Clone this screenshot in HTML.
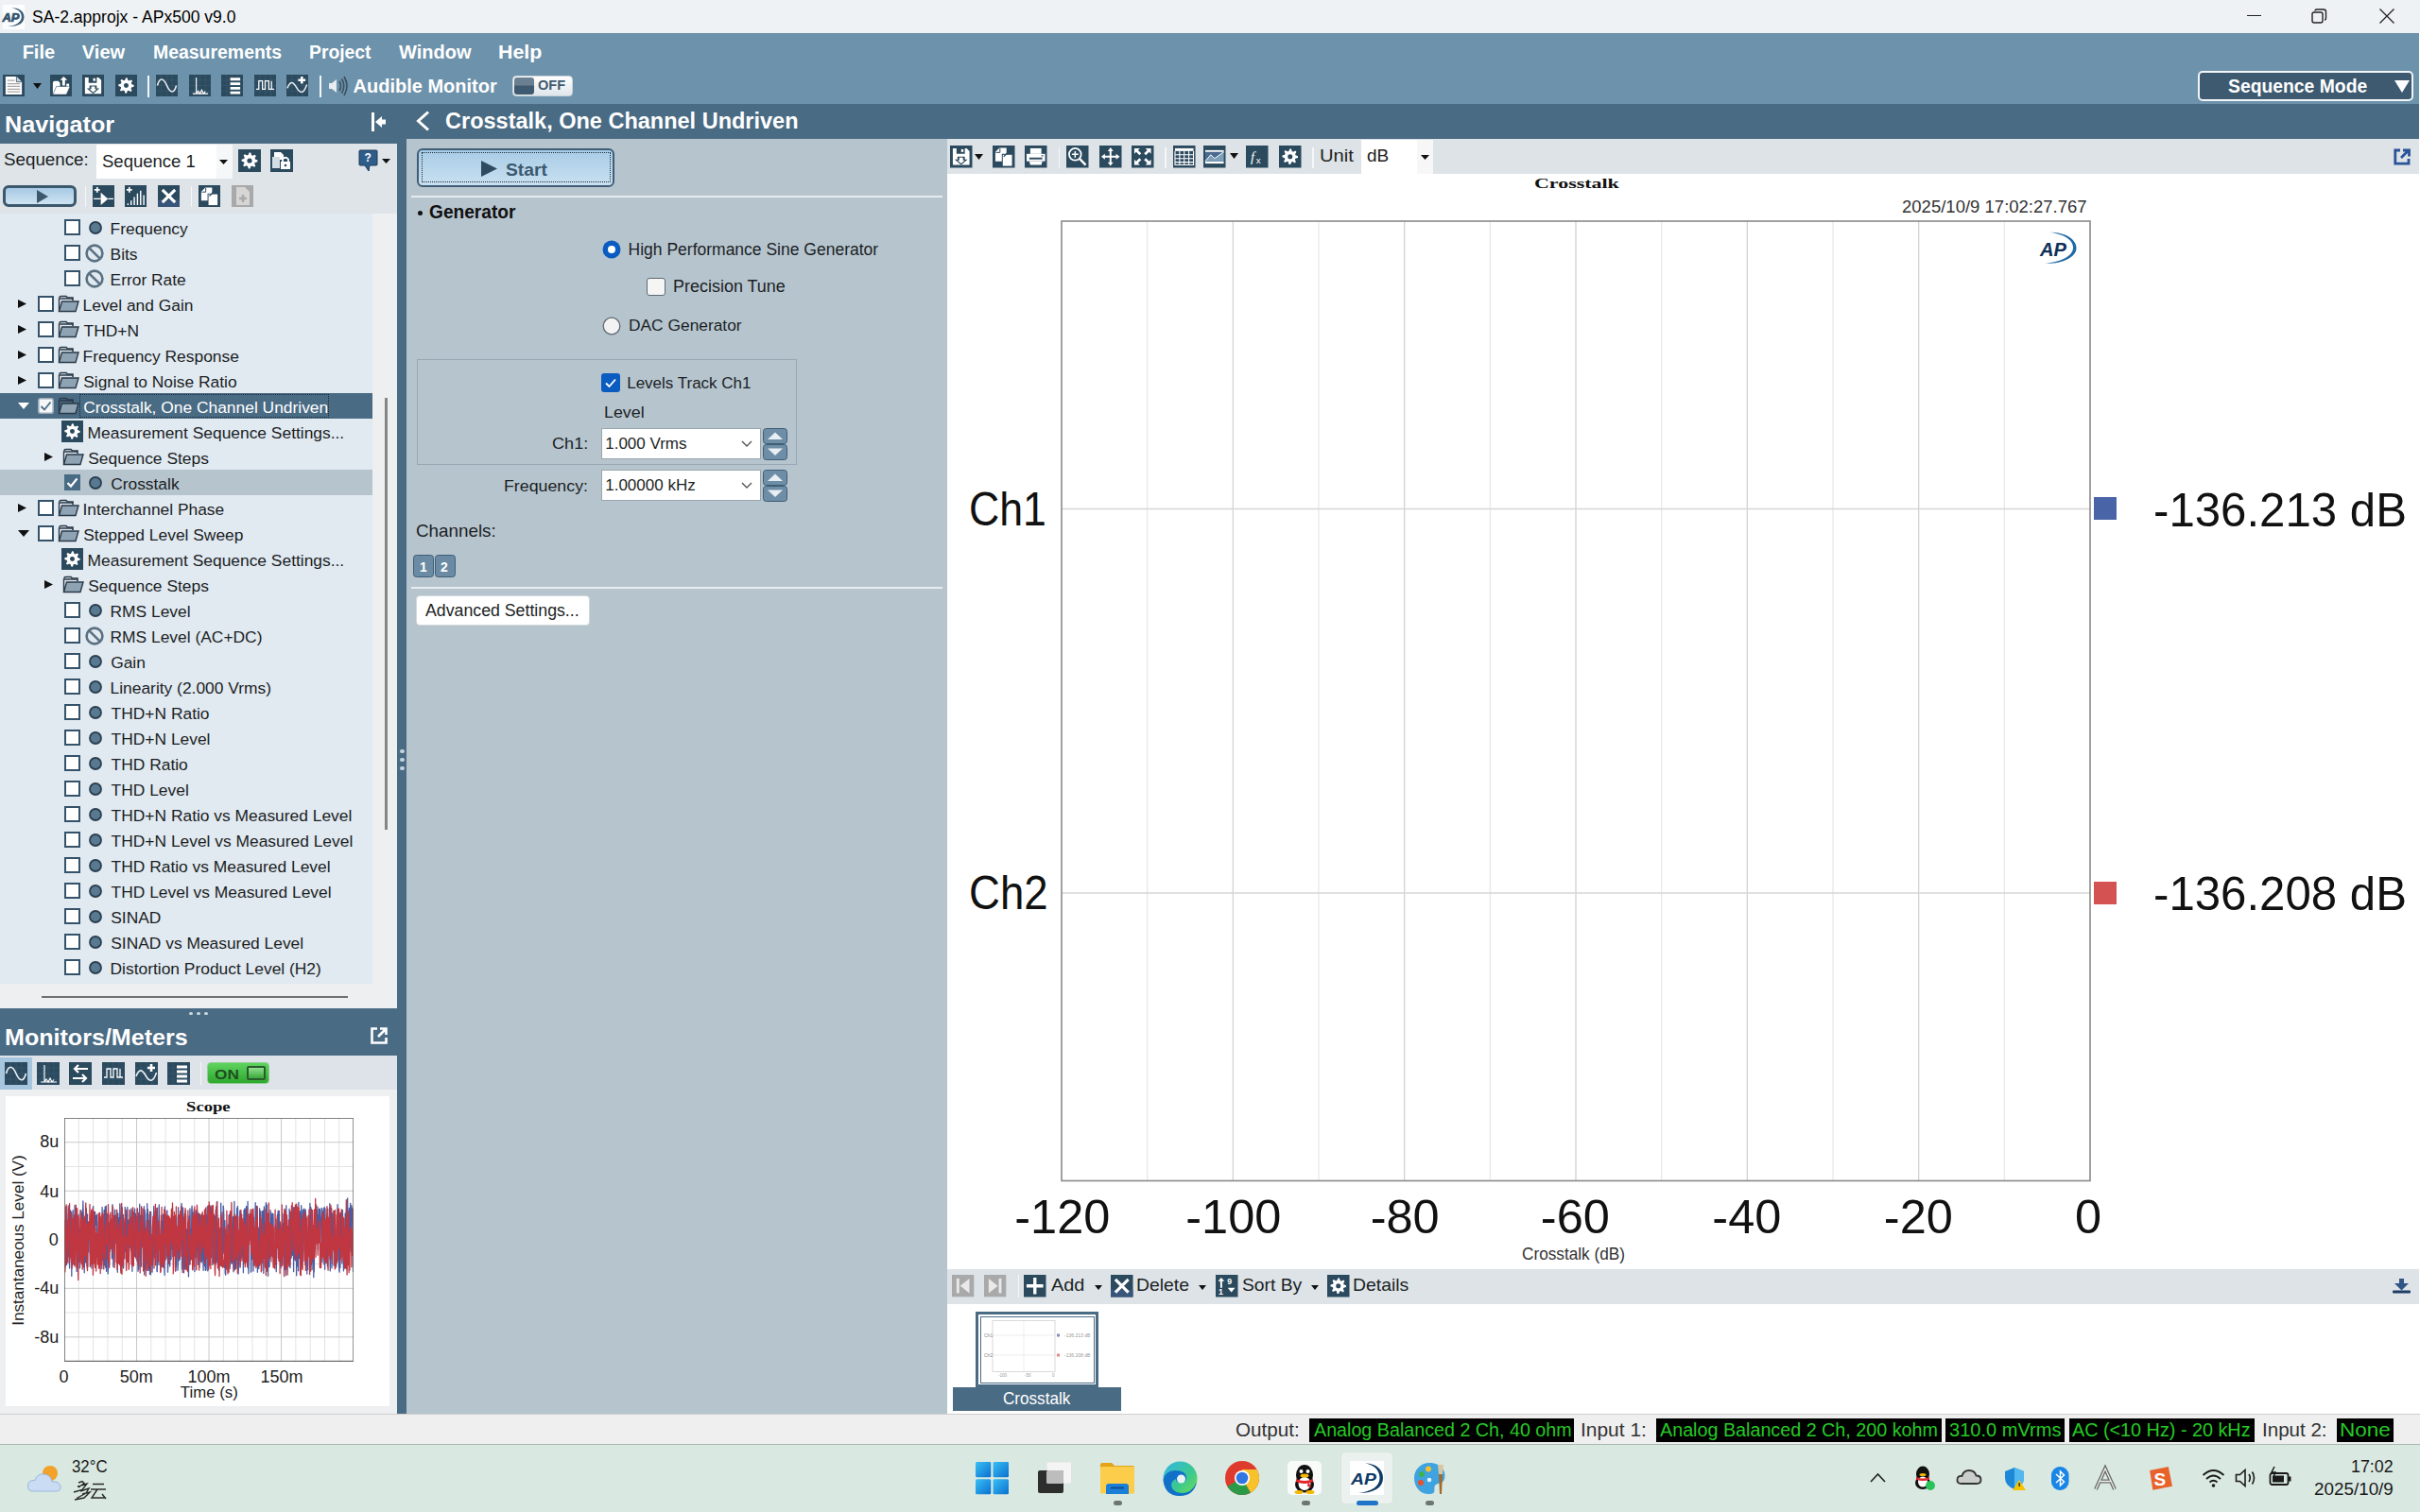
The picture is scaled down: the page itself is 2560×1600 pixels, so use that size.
<!DOCTYPE html>
<html><head><meta charset="utf-8">
<style>
*{box-sizing:border-box;margin:0;padding:0}
html,body{width:2560px;height:1600px;overflow:hidden;background:#fff;font-family:"Liberation Sans",sans-serif;position:relative}
.a{position:absolute}
.t{position:absolute;white-space:pre;line-height:1}
svg{overflow:visible}
</style></head><body>
<div class="a" style="left:0px;top:0px;width:2560px;height:35px;background:#eef2f4;"></div>
<div class="a" style="left:2.5px;top:5px;width:23.5px;height:25.5px;background:#fbfdfe;"></div>
<svg class="a" style="left:3px;top:6.5px;" width="23" height="22" viewBox="0 0 23 22"><path d="M9 1.2 C18 1 22.5 5.5 22.5 11 C22.5 17 17 21.5 5 21 C15 20 19.5 16 19.8 11 C20 6 16 2.5 9 1.2Z" fill="#3d5a72"/><text x="-0.5" y="16" font-family="Liberation Sans" font-weight="bold" font-style="italic" font-size="12.5" fill="#34526b" stroke="#34526b" stroke-width="0.7" textLength="18" lengthAdjust="spacingAndGlyphs">AP</text></svg>
<div class="t" style="left:33.91px;top:8.50px;font-size:18px;font-family:'Liberation Sans',sans-serif;color:#000;transform:scaleX(0.9743);transform-origin:0 0;">SA-2.approjx - APx500 v9.0</div>
<div class="a" style="left:2377px;top:16px;width:15px;height:1px;background:#222;"></div>
<svg class="a" style="left:2444px;top:8px;" width="20" height="18" viewBox="0 0 20 18"><rect x="2" y="5" width="11" height="11" rx="2" fill="none" stroke="#222" stroke-width="1.4"/><path d="M5 3.5 Q5 2 7 2 H14 Q16.5 2 16.5 4.5 V11 Q16.5 13 15 13" fill="none" stroke="#222" stroke-width="1.4"/></svg>
<svg class="a" style="left:2516px;top:8px;" width="18" height="18" viewBox="0 0 18 18"><path d="M1.5 1.5 L16.5 16.5 M16.5 1.5 L1.5 16.5" stroke="#222" stroke-width="1.3"/></svg>
<div class="a" style="left:0px;top:35px;width:2559px;height:75px;background:#6d92ab;"></div>
<div class="t" style="left:23.65px;top:45.00px;font-size:20px;font-family:'Liberation Sans',sans-serif;font-weight:bold;color:#fff;">File</div>
<div class="t" style="left:86.85px;top:45.00px;font-size:20px;font-family:'Liberation Sans',sans-serif;font-weight:bold;color:#fff;">View</div>
<div class="t" style="left:161.69px;top:45.00px;font-size:20px;font-family:'Liberation Sans',sans-serif;font-weight:bold;color:#fff;transform:scaleX(0.9717);transform-origin:0 0;">Measurements</div>
<div class="t" style="left:326.69px;top:45.00px;font-size:20px;font-family:'Liberation Sans',sans-serif;font-weight:bold;color:#fff;transform:scaleX(0.9668);transform-origin:0 0;">Project</div>
<div class="t" style="left:422.00px;top:45.00px;font-size:20px;font-family:'Liberation Sans',sans-serif;font-weight:bold;color:#fff;">Window</div>
<div class="t" style="left:526.56px;top:45.00px;font-size:20px;font-family:'Liberation Sans',sans-serif;font-weight:bold;color:#fff;transform:scaleX(1.0693);transform-origin:0 0;">Help</div>
<svg class="a" style="left:3px;top:79px;" width="23" height="23" viewBox="0 0 24 24"><rect width="24" height="24" fill="#2c4a5e"/><path d="M3 2 H15 L21 8 V22 H3 Z" fill="#fff"/><path d="M15 2 V8 H21" fill="#c9d3da" stroke="#2c4a5e" stroke-width="0.8"/><path d="M5 6.5H13 M5 10H19 M5 13H19 M5 16H19 M5 19H19" stroke="#a8a8a8" stroke-width="1.3"/></svg>
<svg class="a" style="left:35px;top:88px;" width="9" height="6" viewBox="0 0 9 6"><path d="M0 0H9L4.5 6Z" fill="#111"/></svg>
<svg class="a" style="left:53px;top:79px;" width="23" height="23" viewBox="0 0 24 24"><rect width="24" height="24" fill="#2c4a5e"/><path d="M3 9 Q3 7 5 7 H9 L11 9 V22 H3Z" fill="#fff"/><path d="M3 22 L7 13 H22 L18 22Z" fill="#fff" stroke="#2c4a5e" stroke-width="0.6"/><path d="M15 2 L19 6 H16.5 V12 H13.5 V6 H11Z" fill="#fff"/><rect x="18" y="10" width="3" height="3" fill="#fff"/></svg>
<svg class="a" style="left:87px;top:79px;" width="23" height="23" viewBox="0 0 24 24"><rect width="24" height="24" fill="#2c4a5e"/><path d="M3 3 H7 V9 H16 V3 H18 L21 6 V21 H3Z" fill="#fff"/><rect x="12" y="4" width="2.5" height="3" fill="#fff"/><path d="M8 12 H16 V15 H19 L12 21 L5 15 H8Z" fill="#2c4a5e"/><path d="M10 13 H14 V16 H16 L12 19.5 L8 16 H10Z" fill="#fff"/></svg>
<svg class="a" style="left:122px;top:79px;" width="23" height="23" viewBox="0 0 24 24"><rect width="24" height="24" fill="#2c4a5e"/><path d="M20.49 11.58L20.41 13.25L17.65 14.02L17.15 15.08L18.30 17.71L17.06 18.83L14.57 17.42L13.46 17.82L12.42 20.49L10.75 20.41L9.98 17.65L8.92 17.15L6.29 18.30L5.17 17.06L6.58 14.57L6.18 13.46L3.51 12.42L3.59 10.75L6.35 9.98L6.85 8.92L5.70 6.29L6.94 5.17L9.43 6.58L10.54 6.18L11.58 3.51L13.25 3.59L14.02 6.35L15.08 6.85L17.71 5.70L18.83 6.94L17.42 9.43L17.82 10.54Z" fill="#fff"/><circle cx="12" cy="12" r="5.88" fill="#fff"/><circle cx="12" cy="12" r="2.6" fill="#2c4a5e"/></svg>
<div class="a" style="left:156px;top:80px;width:2px;height:23px;background:#f4f7f9;"></div>
<svg class="a" style="left:165px;top:79px;" width="23" height="23" viewBox="0 0 24 24"><rect width="24" height="24" fill="#2c4a5e"/><path d="M0 6H24M0 12H24M0 18H24M6 0V24M12 0V24M18 0V24" stroke="#3d5b72" stroke-width="0.6"/><path d="M1.5 12 C4 3 8 3 12 12 S20 21 22.5 12" fill="none" stroke="#e8eef2" stroke-width="1.7"/></svg>
<svg class="a" style="left:200px;top:79px;" width="23" height="23" viewBox="0 0 24 24"><rect width="24" height="24" fill="#2c4a5e"/><path d="M0 6H24M0 12H24M0 18H24M6 0V24M12 0V24M18 0V24" stroke="#3d5b72" stroke-width="0.6"/><path d="M4 21H21 M8 21V3 M8 21 L10 18 L12 21 L14 17 L16 21 L18 18.5" fill="none" stroke="#fff" stroke-width="1.2"/></svg>
<svg class="a" style="left:234px;top:79px;" width="23" height="23" viewBox="0 0 24 24"><rect width="24" height="24" fill="#2c4a5e"/><path d="M0 6H24M0 12H24M0 18H24M6 0V24M12 0V24M18 0V24" stroke="#3d5b72" stroke-width="0.6"/><path d="M10 5H21M10 10H21M10 15H21M10 20H21" stroke="#fff" stroke-width="3"/></svg>
<svg class="a" style="left:269px;top:79px;" width="23" height="23" viewBox="0 0 24 24"><rect width="24" height="24" fill="#2c4a5e"/><path d="M0 6H24M0 12H24M0 18H24M6 0V24M12 0V24M18 0V24" stroke="#3d5b72" stroke-width="0.6"/><path d="M2 16H5V7H9V16H12V7H16V16H19V7 M19 16 H22" fill="none" stroke="#fff" stroke-width="1.3"/></svg>
<svg class="a" style="left:303px;top:79px;" width="23" height="23" viewBox="0 0 24 24"><rect width="24" height="24" fill="#2c4a5e"/><path d="M0 6H24M0 12H24M0 18H24M6 0V24M12 0V24M18 0V24" stroke="#3d5b72" stroke-width="0.6"/><path d="M1 15 C4 7 7 7 11 14 S19 22 22.5 11" fill="none" stroke="#e8eef2" stroke-width="1.6"/><path d="M17 2V10M13 6H21" stroke="#fff" stroke-width="2.6"/></svg>
<div class="a" style="left:338px;top:80px;width:2px;height:23px;background:#f4f7f9;"></div>
<svg class="a" style="left:346px;top:79px;" width="22" height="24" viewBox="0 0 22 24"><path d="M2 9 H5 L10 5 V19 L5 15 H2Z" fill="#e6ecf0"/><path d="M13 7 Q16 12 13 17 M15.5 4.5 Q20 12 15.5 19.5 M18 2 Q24 12 18 22" fill="none" stroke="#3b4f5e" stroke-width="1.6"/></svg>
<div class="t" style="left:373.50px;top:81.00px;font-size:20px;font-family:'Liberation Sans',sans-serif;font-weight:bold;color:#fff;">Audible Monitor</div>
<div class="a" style="left:541.5px;top:80px;width:64.5px;height:22px;background:linear-gradient(#ffffff,#dfe6ea);border-radius:4px;border:1px solid #c9d3da"></div>
<div class="a" style="left:544px;top:82px;width:21px;height:18px;background:linear-gradient(#6a8091 0%,#6a8091 45%,#3d5a70 50%,#3d5a70 100%);border-radius:3px"></div>
<div class="t" style="left:569.12px;top:82.42px;font-size:15.5px;font-family:'Liberation Sans',sans-serif;font-weight:bold;color:#3d5a70;transform:scaleX(0.9396);transform-origin:0 0;">OFF</div>
<div class="a" style="left:2325px;top:75px;width:228px;height:31.5px;background:#3d5a70;border:2.5px solid #f2f5f7;border-radius:5px"></div>
<div class="t" style="left:2357.42px;top:81.00px;font-size:20px;font-family:'Liberation Sans',sans-serif;font-weight:bold;color:#fff;transform:scaleX(0.9669);transform-origin:0 0;">Sequence Mode</div>
<svg class="a" style="left:2533px;top:85px;" width="16" height="13" viewBox="0 0 16 13"><path d="M0 0H16L8 13Z" fill="#fff"/></svg>
<div class="a" style="left:0px;top:110px;width:430px;height:42px;background:#4a6b84;"></div>
<div class="t" style="left:5.30px;top:119.60px;font-size:24px;font-family:'Liberation Sans',sans-serif;font-weight:bold;color:#fff;transform:scaleX(1.0486);transform-origin:0 0;">Navigator</div>
<div class="a" style="left:393px;top:119px;width:3px;height:20px;background:#fff;"></div>
<svg class="a" style="left:397px;top:122px;" width="12" height="14" viewBox="0 0 12 14"><path d="M0 7 L7 1 V4.5 H11 V9.5 H7 V13Z" fill="#fff"/></svg>
<div class="a" style="left:0px;top:152px;width:420px;height:74px;background:#dfe4e8;"></div>
<div class="t" style="left:4.35px;top:159.53px;font-size:18.2px;font-family:'Liberation Sans',sans-serif;color:#1b1f24;transform:scaleX(1.0321);transform-origin:0 0;">Sequence:</div>
<div class="a" style="left:102px;top:152.5px;width:144px;height:36px;background:#fff;"></div>
<div class="a" style="left:228.5px;top:152.5px;width:17.5px;height:36px;background:#f6f7f8;"></div>
<div class="t" style="left:107.97px;top:161.53px;font-size:18.2px;font-family:'Liberation Sans',sans-serif;color:#1b1f24;transform:scaleX(1.0182);transform-origin:0 0;">Sequence 1</div>
<svg class="a" style="left:232px;top:169px;" width="9" height="5" viewBox="0 0 9 5"><path d="M0 0H9L4.5 5Z" fill="#111"/></svg>
<svg class="a" style="left:252px;top:158px;" width="24" height="24" viewBox="0 0 24 24"><rect width="24" height="24" fill="#2c4a5e"/><path d="M20.49 11.58L20.41 13.25L17.65 14.02L17.15 15.08L18.30 17.71L17.06 18.83L14.57 17.42L13.46 17.82L12.42 20.49L10.75 20.41L9.98 17.65L8.92 17.15L6.29 18.30L5.17 17.06L6.58 14.57L6.18 13.46L3.51 12.42L3.59 10.75L6.35 9.98L6.85 8.92L5.70 6.29L6.94 5.17L9.43 6.58L10.54 6.18L11.58 3.51L13.25 3.59L14.02 6.35L15.08 6.85L17.71 5.70L18.83 6.94L17.42 9.43L17.82 10.54Z" fill="#fff"/><circle cx="12" cy="12" r="5.88" fill="#fff"/><circle cx="12" cy="12" r="2.6" fill="#2c4a5e"/></svg>
<svg class="a" style="left:286px;top:158px;" width="24" height="24" viewBox="0 0 24 24"><rect width="24" height="24" fill="#2c4a5e"/><path d="M4 3 H11 L14 6 V11 H4Z" fill="#fff"/><path d="M2 8 H10 V20 H2Z" fill="#d4dde3"/><rect x="11" y="13" width="10" height="8" fill="#fff"/><path d="M13 13 V10.5 Q16 7 19 10.5 V13" fill="none" stroke="#fff" stroke-width="1.8"/><circle cx="16" cy="17" r="1.3" fill="#2c4a5e"/></svg>
<svg class="a" style="left:379px;top:158px;" width="21" height="25" viewBox="0 0 21 25"><path d="M2 1 H19 Q20 1 20 2 V16 Q20 17 19 17 H12 L11 23 L7 17 H2 Q1 17 1 16 V2 Q1 1 2 1Z" fill="#2f5d8a" stroke="#1e3b58" stroke-width="1"/><text x="6.5" y="13" font-family="Liberation Sans" font-weight="bold" font-size="12" fill="#fff">?</text></svg>
<svg class="a" style="left:404px;top:168px;" width="9" height="5" viewBox="0 0 9 5"><path d="M0 0H9L4.5 5Z" fill="#111"/></svg>
<div class="a" style="left:3.2px;top:195.7px;width:77.8px;height:23.2px;background:linear-gradient(#a6c9e3,#cfe3f1);border:3px solid #3b586d;border-radius:6px"></div>
<svg class="a" style="left:39px;top:201px;" width="12" height="14" viewBox="0 0 12 14"><path d="M0 0 L12 7 L0 14Z" fill="#3b586d"/></svg>
<div class="a" style="left:89.5px;top:197px;width:1.5px;height:22px;background:#f5f7f8;"></div>
<svg class="a" style="left:98px;top:196px;" width="23" height="23" viewBox="0 0 24 24"><rect width="24" height="24" fill="#2c4a5e"/><path d="M2 5H8M5 2V8" stroke="#fff" stroke-width="1.8"/><path d="M1 15H9 M17 15H23" stroke="#fff" stroke-width="1.2"/><path d="M9 8 L17 15 L9 22Z" fill="#fff"/></svg>
<svg class="a" style="left:132px;top:196px;" width="23" height="23" viewBox="0 0 24 24"><rect width="24" height="24" fill="#2c4a5e"/><path d="M2 5H8M5 2V8" stroke="#fff" stroke-width="1.8"/><path d="M3.5 22V20 M7 22V17 M10.5 22V13 M14 22V9 M17.5 22V6 M21 22V11" stroke="#fff" stroke-width="1.5"/></svg>
<svg class="a" style="left:166.6px;top:196px;" width="23" height="23" viewBox="0 0 24 24"><rect width="24" height="24" fill="#2c4a5e"/><rect y="16" width="24" height="8" fill="#38557a"/><path d="M5 5 L19 19 M19 5 L5 19" stroke="#fff" stroke-width="3.2"/></svg>
<div class="a" style="left:201.5px;top:197px;width:1.5px;height:22px;background:#f5f7f8;"></div>
<svg class="a" style="left:210px;top:196px;" width="23" height="23" viewBox="0 0 24 24"><rect width="24" height="24" fill="#2c4a5e"/><path d="M3 7 L7.5 2.5 H15 V9 H10 V17 H3Z" fill="#fff"/><path d="M3.5 7.5 H8 V3" fill="none" stroke="#2c4a5e" stroke-width="1"/><path d="M11 10 H21 V22 H11Z" fill="#fff"/><path d="M12 12 L16 8" stroke="#2c4a5e" stroke-width="1.3"/></svg>
<svg class="a" style="left:245px;top:196px;" width="23" height="23" viewBox="0 0 23 23"><rect width="23" height="23" fill="#a9a9a9"/><path d="M5 2 H14 L19 7 V21 H5Z" fill="#d6d6d6"/><path d="M12 10V18M8 14H16" stroke="#a9a9a9" stroke-width="2.4"/></svg>
<div class="a" style="left:0px;top:226px;width:394px;height:815px;background:#e1e9f1;"></div>
<div class="a" style="left:394px;top:226px;width:26px;height:815px;background:#eeeff0;"></div>
<div class="a" style="left:406.5px;top:421px;width:3px;height:457px;background:#858585;"></div>
<div class="a" style="left:68px;top:232.0px;width:17px;height:17px;background:#fff;border:2.6px solid #34526a"></div>
<svg class="a" style="left:94.3px;top:233.5px;" width="14" height="14" viewBox="0 0 14 14"><circle cx="7" cy="7" r="6" fill="#587990" stroke="#2a3f50" stroke-width="1.8"/></svg>
<div class="t" style="left:116.56px;top:234.01px;font-size:17.4px;font-family:'Liberation Sans',sans-serif;color:#1b1f24;">Frequency</div>
<div class="a" style="left:68px;top:259.0px;width:17px;height:17px;background:#fff;border:2.6px solid #34526a"></div>
<svg class="a" style="left:90px;top:257.5px;" width="20" height="20" viewBox="0 0 20 20"><circle cx="10" cy="10" r="8.4" fill="none" stroke="#5a7182" stroke-width="2.6"/><path d="M4.3 4.3 L15.7 15.7" stroke="#5a7182" stroke-width="2.6"/></svg>
<div class="t" style="left:116.56px;top:261.01px;font-size:17.4px;font-family:'Liberation Sans',sans-serif;color:#1b1f24;">Bits</div>
<div class="a" style="left:68px;top:286.0px;width:17px;height:17px;background:#fff;border:2.6px solid #34526a"></div>
<svg class="a" style="left:90px;top:284.5px;" width="20" height="20" viewBox="0 0 20 20"><circle cx="10" cy="10" r="8.4" fill="none" stroke="#5a7182" stroke-width="2.6"/><path d="M4.3 4.3 L15.7 15.7" stroke="#5a7182" stroke-width="2.6"/></svg>
<div class="t" style="left:116.56px;top:288.01px;font-size:17.4px;font-family:'Liberation Sans',sans-serif;color:#1b1f24;">Error Rate</div>
<svg class="a" style="left:18.5px;top:317.0px;" width="9" height="9" viewBox="0 0 9 9"><path d="M0 0 L9 4.5 L0 9Z" fill="#111"/></svg>
<div class="a" style="left:39.5px;top:313.0px;width:17px;height:17px;background:#fff;border:2.6px solid #34526a"></div>
<svg class="a" style="left:61px;top:312.0px;" width="23" height="19" viewBox="0 0 23 19"><path d="M2 3 Q2 1.5 3.5 1.5 H9 L10.5 3 H16 V6" fill="none" stroke="#2a3a48" stroke-width="1.6"/><path d="M1.5 17.5 V4 H16" fill="none" stroke="#2a3a48" stroke-width="1.4"/><path d="M4.5 7 H22 L19 17.5 H1.5 Z" fill="#8ea3b3" stroke="#2a3a48" stroke-width="1.4"/></svg>
<div class="t" style="left:87.56px;top:315.01px;font-size:17.4px;font-family:'Liberation Sans',sans-serif;color:#1b1f24;">Level and Gain</div>
<svg class="a" style="left:18.5px;top:344.0px;" width="9" height="9" viewBox="0 0 9 9"><path d="M0 0 L9 4.5 L0 9Z" fill="#111"/></svg>
<div class="a" style="left:39.5px;top:340.0px;width:17px;height:17px;background:#fff;border:2.6px solid #34526a"></div>
<svg class="a" style="left:61px;top:339.0px;" width="23" height="19" viewBox="0 0 23 19"><path d="M2 3 Q2 1.5 3.5 1.5 H9 L10.5 3 H16 V6" fill="none" stroke="#2a3a48" stroke-width="1.6"/><path d="M1.5 17.5 V4 H16" fill="none" stroke="#2a3a48" stroke-width="1.4"/><path d="M4.5 7 H22 L19 17.5 H1.5 Z" fill="#8ea3b3" stroke="#2a3a48" stroke-width="1.4"/></svg>
<div class="t" style="left:88.61px;top:342.01px;font-size:17.4px;font-family:'Liberation Sans',sans-serif;color:#1b1f24;">THD+N</div>
<svg class="a" style="left:18.5px;top:371.0px;" width="9" height="9" viewBox="0 0 9 9"><path d="M0 0 L9 4.5 L0 9Z" fill="#111"/></svg>
<div class="a" style="left:39.5px;top:367.0px;width:17px;height:17px;background:#fff;border:2.6px solid #34526a"></div>
<svg class="a" style="left:61px;top:366.0px;" width="23" height="19" viewBox="0 0 23 19"><path d="M2 3 Q2 1.5 3.5 1.5 H9 L10.5 3 H16 V6" fill="none" stroke="#2a3a48" stroke-width="1.6"/><path d="M1.5 17.5 V4 H16" fill="none" stroke="#2a3a48" stroke-width="1.4"/><path d="M4.5 7 H22 L19 17.5 H1.5 Z" fill="#8ea3b3" stroke="#2a3a48" stroke-width="1.4"/></svg>
<div class="t" style="left:87.56px;top:369.01px;font-size:17.4px;font-family:'Liberation Sans',sans-serif;color:#1b1f24;">Frequency Response</div>
<svg class="a" style="left:18.5px;top:398.0px;" width="9" height="9" viewBox="0 0 9 9"><path d="M0 0 L9 4.5 L0 9Z" fill="#111"/></svg>
<div class="a" style="left:39.5px;top:394.0px;width:17px;height:17px;background:#fff;border:2.6px solid #34526a"></div>
<svg class="a" style="left:61px;top:393.0px;" width="23" height="19" viewBox="0 0 23 19"><path d="M2 3 Q2 1.5 3.5 1.5 H9 L10.5 3 H16 V6" fill="none" stroke="#2a3a48" stroke-width="1.6"/><path d="M1.5 17.5 V4 H16" fill="none" stroke="#2a3a48" stroke-width="1.4"/><path d="M4.5 7 H22 L19 17.5 H1.5 Z" fill="#8ea3b3" stroke="#2a3a48" stroke-width="1.4"/></svg>
<div class="t" style="left:88.22px;top:396.01px;font-size:17.4px;font-family:'Liberation Sans',sans-serif;color:#1b1f24;">Signal to Noise Ratio</div>
<div class="a" style="left:0px;top:416px;width:394px;height:26.5px;background:#4a6b84;"></div>
<div class="a" style="left:84px;top:416.5px;width:264px;height:25.5px;background:transparent;border:1px dotted #1a2a38"></div>
<svg class="a" style="left:18.7px;top:426.0px;" width="12" height="7" viewBox="0 0 12 7"><path d="M0 0 H12 L6 7Z" fill="#fff"/></svg>
<svg class="a" style="left:39.5px;top:421.0px;" width="17" height="17" viewBox="0 0 17 17"><rect x="0.8" y="0.8" width="15.4" height="15.4" rx="2" fill="#f4f6f8" stroke="#9aabb8" stroke-width="1.6"/><path d="M3.5 9 L7 12.5 L13.5 4.5" fill="none" stroke="#4a6b84" stroke-width="1.8"/></svg>
<svg class="a" style="left:61px;top:420.0px;" width="23" height="19" viewBox="0 0 23 19"><path d="M2 3 Q2 1.5 3.5 1.5 H9 L10.5 3 H16 V6" fill="none" stroke="#2a3a48" stroke-width="1.6"/><path d="M1.5 17.5 V4 H16" fill="none" stroke="#2a3a48" stroke-width="1.4"/><path d="M4.5 7 H22 L19 17.5 H1.5 Z" fill="#8ea3b3" stroke="#2a3a48" stroke-width="1.4"/></svg>
<div class="t" style="left:88.13px;top:423.01px;font-size:17.4px;font-family:'Liberation Sans',sans-serif;color:#fff;">Crosstalk, One Channel Undriven</div>
<svg class="a" style="left:64.7px;top:445.0px;" width="23" height="23" viewBox="0 0 24 24"><rect width="24" height="24" fill="#2c4a5e"/><path d="M20.49 11.58L20.41 13.25L17.65 14.02L17.15 15.08L18.30 17.71L17.06 18.83L14.57 17.42L13.46 17.82L12.42 20.49L10.75 20.41L9.98 17.65L8.92 17.15L6.29 18.30L5.17 17.06L6.58 14.57L6.18 13.46L3.51 12.42L3.59 10.75L6.35 9.98L6.85 8.92L5.70 6.29L6.94 5.17L9.43 6.58L10.54 6.18L11.58 3.51L13.25 3.59L14.02 6.35L15.08 6.85L17.71 5.70L18.83 6.94L17.42 9.43L17.82 10.54Z" fill="#fff"/><circle cx="12" cy="12" r="5.88" fill="#fff"/><circle cx="12" cy="12" r="2.6" fill="#2c4a5e"/></svg>
<div class="t" style="left:92.56px;top:450.01px;font-size:17.4px;font-family:'Liberation Sans',sans-serif;color:#1b1f24;">Measurement Sequence Settings...</div>
<svg class="a" style="left:47px;top:479.0px;" width="9" height="9" viewBox="0 0 9 9"><path d="M0 0 L9 4.5 L0 9Z" fill="#111"/></svg>
<svg class="a" style="left:66px;top:474.0px;" width="23" height="19" viewBox="0 0 23 19"><path d="M2 3 Q2 1.5 3.5 1.5 H9 L10.5 3 H16 V6" fill="none" stroke="#2a3a48" stroke-width="1.6"/><path d="M1.5 17.5 V4 H16" fill="none" stroke="#2a3a48" stroke-width="1.4"/><path d="M4.5 7 H22 L19 17.5 H1.5 Z" fill="#8ea3b3" stroke="#2a3a48" stroke-width="1.4"/></svg>
<div class="t" style="left:93.22px;top:477.01px;font-size:17.4px;font-family:'Liberation Sans',sans-serif;color:#1b1f24;">Sequence Steps</div>
<div class="a" style="left:0px;top:497px;width:394px;height:26.5px;background:#b6c4ce;"></div>
<svg class="a" style="left:68px;top:502.0px;" width="17" height="17" viewBox="0 0 17 17"><rect width="17" height="17" fill="#4a6b84"/><path d="M3.5 9 L7 12.5 L13.5 4.5" fill="none" stroke="#fff" stroke-width="2.2"/></svg>
<svg class="a" style="left:94.3px;top:503.5px;" width="14" height="14" viewBox="0 0 14 14"><circle cx="7" cy="7" r="6" fill="#587990" stroke="#2a3f50" stroke-width="1.8"/></svg>
<div class="t" style="left:117.13px;top:504.01px;font-size:17.4px;font-family:'Liberation Sans',sans-serif;color:#1b1f24;">Crosstalk</div>
<svg class="a" style="left:18.5px;top:533.0px;" width="9" height="9" viewBox="0 0 9 9"><path d="M0 0 L9 4.5 L0 9Z" fill="#111"/></svg>
<div class="a" style="left:39.5px;top:529.0px;width:17px;height:17px;background:#fff;border:2.6px solid #34526a"></div>
<svg class="a" style="left:61px;top:528.0px;" width="23" height="19" viewBox="0 0 23 19"><path d="M2 3 Q2 1.5 3.5 1.5 H9 L10.5 3 H16 V6" fill="none" stroke="#2a3a48" stroke-width="1.6"/><path d="M1.5 17.5 V4 H16" fill="none" stroke="#2a3a48" stroke-width="1.4"/><path d="M4.5 7 H22 L19 17.5 H1.5 Z" fill="#8ea3b3" stroke="#2a3a48" stroke-width="1.4"/></svg>
<div class="t" style="left:87.39px;top:531.01px;font-size:17.4px;font-family:'Liberation Sans',sans-serif;color:#1b1f24;">Interchannel Phase</div>
<svg class="a" style="left:18.7px;top:561.0px;" width="12" height="7" viewBox="0 0 12 7"><path d="M0 0 H12 L6 7Z" fill="#111"/></svg>
<div class="a" style="left:39.5px;top:556.0px;width:17px;height:17px;background:#fff;border:2.6px solid #34526a"></div>
<svg class="a" style="left:61px;top:555.0px;" width="23" height="19" viewBox="0 0 23 19"><path d="M2 3 Q2 1.5 3.5 1.5 H9 L10.5 3 H16 V6" fill="none" stroke="#2a3a48" stroke-width="1.6"/><path d="M1.5 17.5 V4 H16" fill="none" stroke="#2a3a48" stroke-width="1.4"/><path d="M4.5 7 H22 L19 17.5 H1.5 Z" fill="#8ea3b3" stroke="#2a3a48" stroke-width="1.4"/></svg>
<div class="t" style="left:88.22px;top:558.01px;font-size:17.4px;font-family:'Liberation Sans',sans-serif;color:#1b1f24;">Stepped Level Sweep</div>
<svg class="a" style="left:64.7px;top:580.0px;" width="23" height="23" viewBox="0 0 24 24"><rect width="24" height="24" fill="#2c4a5e"/><path d="M20.49 11.58L20.41 13.25L17.65 14.02L17.15 15.08L18.30 17.71L17.06 18.83L14.57 17.42L13.46 17.82L12.42 20.49L10.75 20.41L9.98 17.65L8.92 17.15L6.29 18.30L5.17 17.06L6.58 14.57L6.18 13.46L3.51 12.42L3.59 10.75L6.35 9.98L6.85 8.92L5.70 6.29L6.94 5.17L9.43 6.58L10.54 6.18L11.58 3.51L13.25 3.59L14.02 6.35L15.08 6.85L17.71 5.70L18.83 6.94L17.42 9.43L17.82 10.54Z" fill="#fff"/><circle cx="12" cy="12" r="5.88" fill="#fff"/><circle cx="12" cy="12" r="2.6" fill="#2c4a5e"/></svg>
<div class="t" style="left:92.56px;top:585.01px;font-size:17.4px;font-family:'Liberation Sans',sans-serif;color:#1b1f24;">Measurement Sequence Settings...</div>
<svg class="a" style="left:47px;top:614.0px;" width="9" height="9" viewBox="0 0 9 9"><path d="M0 0 L9 4.5 L0 9Z" fill="#111"/></svg>
<svg class="a" style="left:66px;top:609.0px;" width="23" height="19" viewBox="0 0 23 19"><path d="M2 3 Q2 1.5 3.5 1.5 H9 L10.5 3 H16 V6" fill="none" stroke="#2a3a48" stroke-width="1.6"/><path d="M1.5 17.5 V4 H16" fill="none" stroke="#2a3a48" stroke-width="1.4"/><path d="M4.5 7 H22 L19 17.5 H1.5 Z" fill="#8ea3b3" stroke="#2a3a48" stroke-width="1.4"/></svg>
<div class="t" style="left:93.22px;top:612.01px;font-size:17.4px;font-family:'Liberation Sans',sans-serif;color:#1b1f24;">Sequence Steps</div>
<div class="a" style="left:68px;top:637.0px;width:17px;height:17px;background:#fff;border:2.6px solid #34526a"></div>
<svg class="a" style="left:94.3px;top:638.5px;" width="14" height="14" viewBox="0 0 14 14"><circle cx="7" cy="7" r="6" fill="#587990" stroke="#2a3f50" stroke-width="1.8"/></svg>
<div class="t" style="left:116.56px;top:639.01px;font-size:17.4px;font-family:'Liberation Sans',sans-serif;color:#1b1f24;">RMS Level</div>
<div class="a" style="left:68px;top:664.0px;width:17px;height:17px;background:#fff;border:2.6px solid #34526a"></div>
<svg class="a" style="left:90px;top:662.5px;" width="20" height="20" viewBox="0 0 20 20"><circle cx="10" cy="10" r="8.4" fill="none" stroke="#5a7182" stroke-width="2.6"/><path d="M4.3 4.3 L15.7 15.7" stroke="#5a7182" stroke-width="2.6"/></svg>
<div class="t" style="left:116.56px;top:666.01px;font-size:17.4px;font-family:'Liberation Sans',sans-serif;color:#1b1f24;">RMS Level (AC+DC)</div>
<div class="a" style="left:68px;top:691.0px;width:17px;height:17px;background:#fff;border:2.6px solid #34526a"></div>
<svg class="a" style="left:94.3px;top:692.5px;" width="14" height="14" viewBox="0 0 14 14"><circle cx="7" cy="7" r="6" fill="#587990" stroke="#2a3f50" stroke-width="1.8"/></svg>
<div class="t" style="left:117.13px;top:693.01px;font-size:17.4px;font-family:'Liberation Sans',sans-serif;color:#1b1f24;">Gain</div>
<div class="a" style="left:68px;top:718.0px;width:17px;height:17px;background:#fff;border:2.6px solid #34526a"></div>
<svg class="a" style="left:94.3px;top:719.5px;" width="14" height="14" viewBox="0 0 14 14"><circle cx="7" cy="7" r="6" fill="#587990" stroke="#2a3f50" stroke-width="1.8"/></svg>
<div class="t" style="left:116.56px;top:720.01px;font-size:17.4px;font-family:'Liberation Sans',sans-serif;color:#1b1f24;">Linearity (2.000 Vrms)</div>
<div class="a" style="left:68px;top:745.0px;width:17px;height:17px;background:#fff;border:2.6px solid #34526a"></div>
<svg class="a" style="left:94.3px;top:746.5px;" width="14" height="14" viewBox="0 0 14 14"><circle cx="7" cy="7" r="6" fill="#587990" stroke="#2a3f50" stroke-width="1.8"/></svg>
<div class="t" style="left:117.61px;top:747.01px;font-size:17.4px;font-family:'Liberation Sans',sans-serif;color:#1b1f24;">THD+N Ratio</div>
<div class="a" style="left:68px;top:772.0px;width:17px;height:17px;background:#fff;border:2.6px solid #34526a"></div>
<svg class="a" style="left:94.3px;top:773.5px;" width="14" height="14" viewBox="0 0 14 14"><circle cx="7" cy="7" r="6" fill="#587990" stroke="#2a3f50" stroke-width="1.8"/></svg>
<div class="t" style="left:117.61px;top:774.01px;font-size:17.4px;font-family:'Liberation Sans',sans-serif;color:#1b1f24;">THD+N Level</div>
<div class="a" style="left:68px;top:799.0px;width:17px;height:17px;background:#fff;border:2.6px solid #34526a"></div>
<svg class="a" style="left:94.3px;top:800.5px;" width="14" height="14" viewBox="0 0 14 14"><circle cx="7" cy="7" r="6" fill="#587990" stroke="#2a3f50" stroke-width="1.8"/></svg>
<div class="t" style="left:117.61px;top:801.01px;font-size:17.4px;font-family:'Liberation Sans',sans-serif;color:#1b1f24;">THD Ratio</div>
<div class="a" style="left:68px;top:826.0px;width:17px;height:17px;background:#fff;border:2.6px solid #34526a"></div>
<svg class="a" style="left:94.3px;top:827.5px;" width="14" height="14" viewBox="0 0 14 14"><circle cx="7" cy="7" r="6" fill="#587990" stroke="#2a3f50" stroke-width="1.8"/></svg>
<div class="t" style="left:117.61px;top:828.01px;font-size:17.4px;font-family:'Liberation Sans',sans-serif;color:#1b1f24;">THD Level</div>
<div class="a" style="left:68px;top:853.0px;width:17px;height:17px;background:#fff;border:2.6px solid #34526a"></div>
<svg class="a" style="left:94.3px;top:854.5px;" width="14" height="14" viewBox="0 0 14 14"><circle cx="7" cy="7" r="6" fill="#587990" stroke="#2a3f50" stroke-width="1.8"/></svg>
<div class="t" style="left:117.61px;top:855.01px;font-size:17.4px;font-family:'Liberation Sans',sans-serif;color:#1b1f24;">THD+N Ratio vs Measured Level</div>
<div class="a" style="left:68px;top:880.0px;width:17px;height:17px;background:#fff;border:2.6px solid #34526a"></div>
<svg class="a" style="left:94.3px;top:881.5px;" width="14" height="14" viewBox="0 0 14 14"><circle cx="7" cy="7" r="6" fill="#587990" stroke="#2a3f50" stroke-width="1.8"/></svg>
<div class="t" style="left:117.61px;top:882.01px;font-size:17.4px;font-family:'Liberation Sans',sans-serif;color:#1b1f24;">THD+N Level vs Measured Level</div>
<div class="a" style="left:68px;top:907.0px;width:17px;height:17px;background:#fff;border:2.6px solid #34526a"></div>
<svg class="a" style="left:94.3px;top:908.5px;" width="14" height="14" viewBox="0 0 14 14"><circle cx="7" cy="7" r="6" fill="#587990" stroke="#2a3f50" stroke-width="1.8"/></svg>
<div class="t" style="left:117.61px;top:909.01px;font-size:17.4px;font-family:'Liberation Sans',sans-serif;color:#1b1f24;">THD Ratio vs Measured Level</div>
<div class="a" style="left:68px;top:934.0px;width:17px;height:17px;background:#fff;border:2.6px solid #34526a"></div>
<svg class="a" style="left:94.3px;top:935.5px;" width="14" height="14" viewBox="0 0 14 14"><circle cx="7" cy="7" r="6" fill="#587990" stroke="#2a3f50" stroke-width="1.8"/></svg>
<div class="t" style="left:117.61px;top:936.01px;font-size:17.4px;font-family:'Liberation Sans',sans-serif;color:#1b1f24;">THD Level vs Measured Level</div>
<div class="a" style="left:68px;top:961.0px;width:17px;height:17px;background:#fff;border:2.6px solid #34526a"></div>
<svg class="a" style="left:94.3px;top:962.5px;" width="14" height="14" viewBox="0 0 14 14"><circle cx="7" cy="7" r="6" fill="#587990" stroke="#2a3f50" stroke-width="1.8"/></svg>
<div class="t" style="left:117.22px;top:963.01px;font-size:17.4px;font-family:'Liberation Sans',sans-serif;color:#1b1f24;">SINAD</div>
<div class="a" style="left:68px;top:988.0px;width:17px;height:17px;background:#fff;border:2.6px solid #34526a"></div>
<svg class="a" style="left:94.3px;top:989.5px;" width="14" height="14" viewBox="0 0 14 14"><circle cx="7" cy="7" r="6" fill="#587990" stroke="#2a3f50" stroke-width="1.8"/></svg>
<div class="t" style="left:117.22px;top:990.01px;font-size:17.4px;font-family:'Liberation Sans',sans-serif;color:#1b1f24;">SINAD vs Measured Level</div>
<div class="a" style="left:68px;top:1015.0px;width:17px;height:17px;background:#fff;border:2.6px solid #34526a"></div>
<svg class="a" style="left:94.3px;top:1016.5px;" width="14" height="14" viewBox="0 0 14 14"><circle cx="7" cy="7" r="6" fill="#587990" stroke="#2a3f50" stroke-width="1.8"/></svg>
<div class="t" style="left:116.56px;top:1017.01px;font-size:17.4px;font-family:'Liberation Sans',sans-serif;color:#1b1f24;">Distortion Product Level (H2)</div>
<div class="a" style="left:0px;top:1041px;width:420px;height:26px;background:#eeeff0;"></div>
<div class="a" style="left:44px;top:1054px;width:324px;height:2px;background:#707070;"></div>
<div class="a" style="left:0px;top:1067px;width:430px;height:50px;background:#4a6b84;"></div>
<div class="a" style="left:200px;top:1070.5px;width:3.5px;height:3.5px;background:#c9d5de;border-radius:50%"></div>
<div class="a" style="left:208px;top:1070.5px;width:3.5px;height:3.5px;background:#c9d5de;border-radius:50%"></div>
<div class="a" style="left:216px;top:1070.5px;width:3.5px;height:3.5px;background:#c9d5de;border-radius:50%"></div>
<div class="t" style="left:5.31px;top:1085.60px;font-size:24px;font-family:'Liberation Sans',sans-serif;font-weight:bold;color:#fff;transform:scaleX(1.0451);transform-origin:0 0;">Monitors/Meters</div>
<svg class="a" style="left:391px;top:1086px;" width="20" height="20" viewBox="0 0 20 20"><path d="M8 2.5 H2.5 V17.5 H17.5 V12" fill="none" stroke="#fff" stroke-width="2.6"/><path d="M9 11 L17 3 M11 2.5 H17.5 V9" fill="none" stroke="#fff" stroke-width="2.6"/></svg>
<div class="a" style="left:0px;top:1117px;width:420px;height:36px;background:#dde3e8;"></div>
<div class="a" style="left:0px;top:1119px;width:34px;height:34px;background:#a6c6e0;"></div>
<svg class="a" style="left:4.5px;top:1124px;" width="24" height="24" viewBox="0 0 24 24"><rect width="24" height="24" fill="#2c4a5e"/><path d="M0 6H24M0 12H24M0 18H24M6 0V24M12 0V24M18 0V24" stroke="#3d5b72" stroke-width="0.6"/><path d="M1.5 12 C4 3 8 3 12 12 S20 21 22.5 12" fill="none" stroke="#e8eef2" stroke-width="1.7"/></svg>
<svg class="a" style="left:39px;top:1124px;" width="24" height="24" viewBox="0 0 24 24"><rect width="24" height="24" fill="#2c4a5e"/><path d="M0 6H24M0 12H24M0 18H24M6 0V24M12 0V24M18 0V24" stroke="#3d5b72" stroke-width="0.6"/><path d="M4 21H21 M8 21V3 M8 21 L10 18 L12 21 L14 17 L16 21 L18 18.5" fill="none" stroke="#fff" stroke-width="1.2"/></svg>
<svg class="a" style="left:73px;top:1124px;" width="24" height="24" viewBox="0 0 24 24"><rect width="24" height="24" fill="#2c4a5e"/><path d="M20 7 H6 M10 3 L6 7 L10 11 M4 17 H18 M14 13 L18 17 L14 21" fill="none" stroke="#fff" stroke-width="2.2"/></svg>
<svg class="a" style="left:107.6px;top:1124px;" width="24" height="24" viewBox="0 0 24 24"><rect width="24" height="24" fill="#2c4a5e"/><path d="M0 6H24M0 12H24M0 18H24M6 0V24M12 0V24M18 0V24" stroke="#3d5b72" stroke-width="0.6"/><path d="M2 16H5V7H9V16H12V7H16V16H19V7 M19 16 H22" fill="none" stroke="#fff" stroke-width="1.3"/></svg>
<svg class="a" style="left:142.6px;top:1124px;" width="24" height="24" viewBox="0 0 24 24"><rect width="24" height="24" fill="#2c4a5e"/><path d="M0 6H24M0 12H24M0 18H24M6 0V24M12 0V24M18 0V24" stroke="#3d5b72" stroke-width="0.6"/><path d="M1 15 C4 7 7 7 11 14 S19 22 22.5 11" fill="none" stroke="#e8eef2" stroke-width="1.6"/><path d="M17 2V10M13 6H21" stroke="#fff" stroke-width="2.6"/></svg>
<svg class="a" style="left:177px;top:1124px;" width="24" height="24" viewBox="0 0 24 24"><rect width="24" height="24" fill="#2c4a5e"/><path d="M0 6H24M0 12H24M0 18H24M6 0V24M12 0V24M18 0V24" stroke="#3d5b72" stroke-width="0.6"/><path d="M10 5H21M10 10H21M10 15H21M10 20H21" stroke="#fff" stroke-width="3"/></svg>
<div class="a" style="left:211.5px;top:1124px;width:1.5px;height:24px;background:#f5f7f8;"></div>
<div class="a" style="left:219px;top:1124px;width:66px;height:23px;background:linear-gradient(#5fd35f,#2ea82e);border-radius:4px;border:1px solid #8fcf8f"></div>
<div class="t" style="left:227.31px;top:1129.25px;font-size:15px;font-family:'Liberation Sans',sans-serif;font-weight:bold;color:#1f4f1f;transform:scaleX(1.1490);transform-origin:0 0;">ON</div>
<div class="a" style="left:261px;top:1128px;width:20px;height:15px;background:linear-gradient(#8fe08f,#38a838);border:2px solid #2b5a2b;border-radius:2px"></div>
<div class="a" style="left:0px;top:1153px;width:420px;height:343px;background:#eeeff0;"></div>
<div class="a" style="left:6px;top:1160px;width:406px;height:328px;background:#fff;"></div>
<svg class="a" style="left:68.4px;top:1183px;overflow:hidden" width="306.1" height="257.5999999999999" viewBox="0 0 306.1 257.5999999999999"><line x1="15.31" y1="0" x2="15.31" y2="257.5999999999999" stroke="#e3e3e3" stroke-width="1"/><line x1="30.61" y1="0" x2="30.61" y2="257.5999999999999" stroke="#e3e3e3" stroke-width="1"/><line x1="45.92" y1="0" x2="45.92" y2="257.5999999999999" stroke="#e3e3e3" stroke-width="1"/><line x1="61.22" y1="0" x2="61.22" y2="257.5999999999999" stroke="#e3e3e3" stroke-width="1"/><line x1="76.53" y1="0" x2="76.53" y2="257.5999999999999" stroke="#c8c8c8" stroke-width="1"/><line x1="91.83" y1="0" x2="91.83" y2="257.5999999999999" stroke="#e3e3e3" stroke-width="1"/><line x1="107.14" y1="0" x2="107.14" y2="257.5999999999999" stroke="#e3e3e3" stroke-width="1"/><line x1="122.44" y1="0" x2="122.44" y2="257.5999999999999" stroke="#e3e3e3" stroke-width="1"/><line x1="137.75" y1="0" x2="137.75" y2="257.5999999999999" stroke="#e3e3e3" stroke-width="1"/><line x1="153.05" y1="0" x2="153.05" y2="257.5999999999999" stroke="#c8c8c8" stroke-width="1"/><line x1="168.36" y1="0" x2="168.36" y2="257.5999999999999" stroke="#e3e3e3" stroke-width="1"/><line x1="183.66" y1="0" x2="183.66" y2="257.5999999999999" stroke="#e3e3e3" stroke-width="1"/><line x1="198.97" y1="0" x2="198.97" y2="257.5999999999999" stroke="#e3e3e3" stroke-width="1"/><line x1="214.27" y1="0" x2="214.27" y2="257.5999999999999" stroke="#e3e3e3" stroke-width="1"/><line x1="229.57" y1="0" x2="229.57" y2="257.5999999999999" stroke="#c8c8c8" stroke-width="1"/><line x1="244.88" y1="0" x2="244.88" y2="257.5999999999999" stroke="#e3e3e3" stroke-width="1"/><line x1="260.19" y1="0" x2="260.19" y2="257.5999999999999" stroke="#e3e3e3" stroke-width="1"/><line x1="275.49" y1="0" x2="275.49" y2="257.5999999999999" stroke="#e3e3e3" stroke-width="1"/><line x1="290.80" y1="0" x2="290.80" y2="257.5999999999999" stroke="#e3e3e3" stroke-width="1"/><line x1="0" y1="25.76" x2="306.1" y2="25.76" stroke="#c8c8c8" stroke-width="1"/><line x1="0" y1="51.52" x2="306.1" y2="51.52" stroke="#e3e3e3" stroke-width="1"/><line x1="0" y1="77.28" x2="306.1" y2="77.28" stroke="#c8c8c8" stroke-width="1"/><line x1="0" y1="103.04" x2="306.1" y2="103.04" stroke="#e3e3e3" stroke-width="1"/><line x1="0" y1="128.80" x2="306.1" y2="128.80" stroke="#c8c8c8" stroke-width="1"/><line x1="0" y1="154.56" x2="306.1" y2="154.56" stroke="#e3e3e3" stroke-width="1"/><line x1="0" y1="180.32" x2="306.1" y2="180.32" stroke="#c8c8c8" stroke-width="1"/><line x1="0" y1="206.08" x2="306.1" y2="206.08" stroke="#e3e3e3" stroke-width="1"/><line x1="0" y1="231.84" x2="306.1" y2="231.84" stroke="#c8c8c8" stroke-width="1"/><polyline points="0.0,151.7 0.3,156.5 0.6,108.7 0.8,124.7 1.1,157.3 1.4,147.3 1.7,129.2 1.9,151.5 2.2,115.3 2.5,155.4 2.8,127.8 3.1,125.7 3.3,125.6 3.6,113.5 3.9,106.3 4.2,93.0 4.5,146.8 4.7,107.5 5.0,115.1 5.3,148.2 5.6,159.0 5.8,97.5 6.1,140.5 6.4,135.0 6.7,98.1 7.0,119.8 7.2,123.3 7.5,101.9 7.8,167.4 8.1,120.0 8.4,128.4 8.6,155.3 8.9,129.2 9.2,97.6 9.5,149.8 9.7,123.8 10.0,140.2 10.3,108.0 10.6,106.9 10.9,155.8 11.1,92.4 11.4,102.5 11.7,118.3 12.0,96.0 12.3,126.2 12.5,103.4 12.8,99.7 13.1,162.4 13.4,106.3 13.6,130.5 13.9,122.1 14.2,146.6 14.5,105.6 14.8,137.7 15.0,102.2 15.3,152.4 15.6,120.9 15.9,131.9 16.2,117.7 16.4,158.9 16.7,154.6 17.0,117.9 17.3,106.8 17.5,129.4 17.8,97.6 18.1,148.0 18.4,100.3 18.7,144.0 18.9,100.0 19.2,132.8 19.5,112.3 19.8,88.0 20.1,97.2 20.3,103.4 20.6,156.7 20.9,136.9 21.2,163.8 21.4,154.1 21.7,146.3 22.0,103.8 22.3,143.6 22.6,152.9 22.8,130.9 23.1,95.3 23.4,97.2 23.7,118.5 24.0,157.1 24.2,128.8 24.5,101.8 24.8,157.5 25.1,109.7 25.3,141.4 25.6,114.3 25.9,113.1 26.2,120.1 26.5,128.6 26.7,121.4 27.0,143.1 27.3,128.1 27.6,152.4 27.9,114.7 28.1,130.0 28.4,110.3 28.7,128.9 29.0,159.2 29.2,125.7 29.5,148.3 29.8,110.6 30.1,132.6 30.4,139.2 30.6,93.4 30.9,143.8 31.2,144.8 31.5,138.6 31.8,132.1 32.0,153.3 32.3,123.8 32.6,99.5 32.9,120.7 33.1,107.2 33.4,103.6 33.7,108.3 34.0,113.4 34.3,106.2 34.5,102.4 34.8,140.5 35.1,124.8 35.4,127.4 35.7,137.4 35.9,122.8 36.2,130.3 36.5,109.8 36.8,122.6 37.0,154.7 37.3,124.1 37.6,134.4 37.9,104.6 38.2,155.3 38.4,148.1 38.7,128.4 39.0,132.2 39.3,116.5 39.6,135.9 39.8,159.6 40.1,94.4 40.4,138.9 40.7,150.4 40.9,144.7 41.2,136.3 41.5,153.5 41.8,130.1 42.1,97.5 42.3,155.9 42.6,127.2 42.9,119.9 43.2,93.8 43.5,100.2 43.7,158.2 44.0,124.4 44.3,93.2 44.6,162.3 44.8,135.2 45.1,149.5 45.4,106.7 45.7,101.4 46.0,131.5 46.2,164.9 46.5,158.3 46.8,129.3 47.1,110.1 47.3,132.3 47.6,114.0 47.9,137.4 48.2,141.2 48.5,110.4 48.7,126.2 49.0,129.8 49.3,109.0 49.6,130.3 49.9,108.5 50.1,128.5 50.4,148.9 50.7,136.3 51.0,91.6 51.2,122.5 51.5,94.9 51.8,157.6 52.1,152.4 52.4,112.4 52.6,108.6 52.9,122.2 53.2,114.3 53.5,97.2 53.8,116.7 54.0,124.6 54.3,131.8 54.6,127.0 54.9,132.5 55.1,120.1 55.4,123.0 55.7,97.4 56.0,121.3 56.3,163.3 56.5,128.0 56.8,101.0 57.1,122.7 57.4,112.1 57.7,135.0 57.9,137.8 58.2,105.3 58.5,154.2 58.8,91.0 59.0,91.9 59.3,103.4 59.6,149.3 59.9,161.4 60.2,106.4 60.4,130.2 60.7,149.6 61.0,138.9 61.3,107.6 61.6,156.5 61.8,134.6 62.1,112.3 62.4,102.5 62.7,159.1 62.9,113.4 63.2,137.1 63.5,133.5 63.8,109.2 64.1,138.6 64.3,94.4 64.6,141.7 64.9,126.0 65.2,149.6 65.5,114.6 65.7,103.2 66.0,99.0 66.3,151.3 66.6,124.8 66.8,94.3 67.1,145.5 67.4,126.8 67.7,115.6 68.0,108.0 68.2,120.9 68.5,110.9 68.8,119.2 69.1,137.4 69.4,105.9 69.6,121.5 69.9,109.2 70.2,108.8 70.5,140.5 70.7,135.0 71.0,95.8 71.3,154.9 71.6,144.7 71.9,162.3 72.1,107.9 72.4,97.5 72.7,147.7 73.0,140.6 73.3,154.7 73.5,114.4 73.8,132.0 74.1,101.0 74.4,146.4 74.6,96.1 74.9,133.3 75.2,104.9 75.5,101.3 75.8,104.6 76.0,126.3 76.3,115.1 76.6,115.3 76.9,151.3 77.2,128.6 77.4,95.8 77.7,101.5 78.0,162.3 78.3,111.7 78.5,139.3 78.8,160.1 79.1,156.2 79.4,118.6 79.7,91.1 79.9,129.6 80.2,135.2 80.5,134.5 80.8,103.1 81.1,105.6 81.3,153.8 81.6,157.3 81.9,95.7 82.2,129.3 82.4,120.3 82.7,103.3 83.0,118.7 83.3,111.2 83.6,128.9 83.8,147.2 84.1,151.2 84.4,93.7 84.7,166.1 85.0,116.0 85.2,97.3 85.5,143.8 85.8,160.1 86.1,125.8 86.3,141.2 86.6,138.4 86.9,129.1 87.2,100.8 87.5,153.6 87.7,90.7 88.0,161.6 88.3,96.4 88.6,123.7 88.8,108.3 89.1,161.2 89.4,126.4 89.7,114.2 90.0,115.2 90.2,102.0 90.5,165.3 90.8,125.6 91.1,126.0 91.4,165.8 91.6,99.3 91.9,134.2 92.2,154.7 92.5,147.7 92.7,123.5 93.0,163.2 93.3,156.2 93.6,148.4 93.9,143.9 94.1,108.8 94.4,118.0 94.7,93.4 95.0,112.0 95.3,148.0 95.5,143.4 95.8,145.9 96.1,147.4 96.4,117.0 96.6,110.2 96.9,142.1 97.2,137.1 97.5,104.5 97.8,95.6 98.0,161.7 98.3,162.7 98.6,105.0 98.9,122.7 99.2,127.2 99.4,116.6 99.7,112.7 100.0,155.5 100.3,91.8 100.5,102.8 100.8,128.7 101.1,126.0 101.4,134.3 101.7,128.5 101.9,157.4 102.2,119.3 102.5,108.3 102.8,132.3 103.1,109.5 103.3,157.5 103.6,110.5 103.9,156.9 104.2,143.6 104.4,102.2 104.7,140.3 105.0,157.7 105.3,149.7 105.6,102.0 105.8,156.3 106.1,166.3 106.4,93.9 106.7,113.1 107.0,135.6 107.2,149.9 107.5,106.7 107.8,104.4 108.1,106.7 108.3,121.6 108.6,121.4 108.9,98.0 109.2,130.5 109.5,163.2 109.7,157.7 110.0,111.8 110.3,106.6 110.6,117.3 110.9,115.9 111.1,140.8 111.4,139.5 111.7,157.0 112.0,149.0 112.2,147.9 112.5,107.6 112.8,143.9 113.1,149.7 113.4,117.6 113.6,139.1 113.9,129.1 114.2,98.6 114.5,94.6 114.8,146.5 115.0,144.5 115.3,124.4 115.6,124.3 115.9,136.1 116.1,119.7 116.4,107.1 116.7,103.9 117.0,134.4 117.3,116.6 117.5,157.1 117.8,162.1 118.1,158.9 118.4,155.7 118.7,104.7 118.9,131.5 119.2,131.8 119.5,137.3 119.8,143.0 120.0,161.3 120.3,155.4 120.6,94.7 120.9,135.0 121.2,151.1 121.4,148.2 121.7,103.8 122.0,106.2 122.3,140.2 122.6,116.0 122.8,141.2 123.1,123.1 123.4,119.0 123.7,121.2 123.9,93.9 124.2,90.5 124.5,159.9 124.8,127.2 125.1,163.4 125.3,138.9 125.6,94.9 125.9,112.5 126.2,114.6 126.5,159.8 126.7,105.2 127.0,119.0 127.3,141.8 127.6,102.1 127.8,160.2 128.1,147.1 128.4,98.3 128.7,159.4 129.0,151.1 129.2,120.8 129.5,117.9 129.8,131.1 130.1,157.8 130.4,136.2 130.6,110.7 130.9,137.0 131.2,156.0 131.5,167.9 131.7,143.8 132.0,104.2 132.3,155.0 132.6,127.8 132.9,95.9 133.1,99.8 133.4,131.7 133.7,117.3 134.0,149.5 134.2,134.6 134.5,149.5 134.8,97.5 135.1,93.1 135.4,110.6 135.6,133.5 135.9,104.0 136.2,99.8 136.5,138.7 136.8,114.9 137.0,153.4 137.3,153.5 137.6,104.9 137.9,162.6 138.1,110.9 138.4,147.2 138.7,103.8 139.0,99.9 139.3,97.9 139.5,140.2 139.8,141.5 140.1,141.6 140.4,116.4 140.7,99.6 140.9,147.3 141.2,145.5 141.5,155.2 141.8,155.3 142.0,111.2 142.3,101.1 142.6,101.9 142.9,158.4 143.2,134.7 143.4,102.0 143.7,130.7 144.0,145.9 144.3,106.5 144.6,103.6 144.8,152.6 145.1,134.5 145.4,152.6 145.7,148.7 145.9,116.3 146.2,139.8 146.5,103.0 146.8,142.8 147.1,161.3 147.3,117.1 147.6,136.6 147.9,149.7 148.2,106.1 148.5,155.8 148.7,156.8 149.0,136.3 149.3,161.4 149.6,105.0 149.8,160.9 150.1,160.5 150.4,102.7 150.7,133.0 151.0,101.2 151.2,93.8 151.5,120.1 151.8,161.9 152.1,110.8 152.4,159.2 152.6,158.0 152.9,105.4 153.2,143.4 153.5,102.7 153.7,109.8 154.0,101.3 154.3,107.0 154.6,93.9 154.9,129.2 155.1,93.0 155.4,99.7 155.7,110.9 156.0,121.9 156.3,118.1 156.5,100.9 156.8,155.4 157.1,119.2 157.4,112.7 157.6,139.4 157.9,149.9 158.2,152.4 158.5,106.5 158.8,103.6 159.0,106.7 159.3,109.2 159.6,112.7 159.9,155.4 160.2,97.2 160.4,133.6 160.7,124.7 161.0,153.2 161.3,107.3 161.5,151.8 161.8,88.4 162.1,111.9 162.4,126.3 162.7,131.3 162.9,144.7 163.2,127.7 163.5,161.2 163.8,142.1 164.1,150.7 164.3,155.7 164.6,120.2 164.9,155.0 165.2,156.4 165.4,135.5 165.7,90.1 166.0,108.3 166.3,117.1 166.6,150.8 166.8,157.2 167.1,135.6 167.4,117.5 167.7,118.3 168.0,143.6 168.2,93.1 168.5,95.6 168.8,103.6 169.1,141.0 169.3,125.7 169.6,158.4 169.9,108.7 170.2,164.8 170.5,134.9 170.7,166.2 171.0,118.5 171.3,151.3 171.6,154.1 171.9,140.6 172.1,130.8 172.4,123.6 172.7,154.2 173.0,113.2 173.2,127.6 173.5,150.3 173.8,137.4 174.1,103.2 174.4,133.8 174.6,107.1 174.9,101.9 175.2,159.4 175.5,154.6 175.7,142.8 176.0,109.2 176.3,135.5 176.6,121.4 176.9,153.9 177.1,152.6 177.4,153.8 177.7,119.6 178.0,117.0 178.3,151.7 178.5,104.6 178.8,157.3 179.1,162.8 179.4,139.0 179.6,130.9 179.9,88.4 180.2,128.7 180.5,160.3 180.8,124.1 181.0,160.1 181.3,104.6 181.6,144.3 181.9,159.2 182.2,150.7 182.4,107.1 182.7,95.4 183.0,149.4 183.3,93.3 183.5,94.2 183.8,140.9 184.1,165.1 184.4,158.1 184.7,133.1 184.9,150.4 185.2,150.3 185.5,129.3 185.8,98.2 186.1,158.3 186.3,98.1 186.6,120.8 186.9,109.3 187.2,132.2 187.4,102.0 187.7,148.6 188.0,141.8 188.3,138.0 188.6,132.0 188.8,136.6 189.1,135.9 189.4,163.8 189.7,130.2 190.0,97.9 190.2,103.2 190.5,137.5 190.8,96.2 191.1,101.1 191.3,141.5 191.6,154.2 191.9,110.7 192.2,95.2 192.5,108.3 192.7,93.4 193.0,122.6 193.3,129.5 193.6,150.9 193.9,143.2 194.1,88.3 194.4,159.0 194.7,158.4 195.0,164.7 195.2,130.8 195.5,122.7 195.8,129.8 196.1,101.2 196.4,108.9 196.6,110.7 196.9,121.6 197.2,118.4 197.5,163.2 197.8,162.1 198.0,123.9 198.3,146.0 198.6,149.6 198.9,125.5 199.1,110.9 199.4,136.1 199.7,136.8 200.0,162.0 200.3,114.5 200.5,105.1 200.8,154.5 201.1,155.2 201.4,155.8 201.7,130.5 201.9,151.3 202.2,89.7 202.5,141.4 202.8,126.3 203.0,127.2 203.3,93.5 203.6,114.1 203.9,93.4 204.2,125.3 204.4,163.3 204.7,139.8 205.0,115.6 205.3,152.2 205.6,123.3 205.8,159.5 206.1,117.3 206.4,137.2 206.7,95.8 206.9,156.0 207.2,144.7 207.5,98.8 207.8,120.6 208.1,128.1 208.3,139.5 208.6,150.1 208.9,137.5 209.2,98.6 209.5,107.9 209.7,147.4 210.0,122.3 210.3,101.2 210.6,98.1 210.8,164.4 211.1,153.4 211.4,93.9 211.7,147.6 212.0,110.9 212.2,119.9 212.5,111.8 212.8,158.6 213.1,97.7 213.4,89.6 213.6,141.9 213.9,113.3 214.2,162.3 214.5,91.8 214.7,123.2 215.0,107.7 215.3,105.8 215.6,167.3 215.9,101.1 216.1,157.6 216.4,157.6 216.7,119.0 217.0,157.6 217.3,116.7 217.5,148.8 217.8,114.8 218.1,97.7 218.4,101.9 218.6,140.8 218.9,143.8 219.2,120.4 219.5,118.2 219.8,100.9 220.0,113.4 220.3,139.9 220.6,147.3 220.9,101.3 221.1,105.4 221.4,154.0 221.7,148.9 222.0,157.5 222.3,134.3 222.5,144.8 222.8,155.6 223.1,116.4 223.4,113.4 223.7,145.3 223.9,107.0 224.2,162.7 224.5,153.1 224.8,125.2 225.0,120.6 225.3,117.6 225.6,101.9 225.9,137.2 226.2,98.2 226.4,116.4 226.7,107.9 227.0,134.8 227.3,98.5 227.6,136.0 227.8,129.8 228.1,131.8 228.4,130.7 228.7,151.5 228.9,111.8 229.2,158.7 229.5,141.5 229.8,127.9 230.1,126.4 230.3,121.7 230.6,120.8 230.9,155.0 231.2,144.5 231.5,111.4 231.7,126.7 232.0,101.7 232.3,124.5 232.6,124.0 232.8,107.7 233.1,96.8 233.4,160.3 233.7,143.9 234.0,155.8 234.2,154.9 234.5,166.7 234.8,92.7 235.1,160.5 235.4,141.0 235.6,103.8 235.9,137.7 236.2,141.9 236.5,153.2 236.7,123.1 237.0,148.0 237.3,129.5 237.6,130.2 237.9,157.2 238.1,96.3 238.4,99.5 238.7,138.9 239.0,158.6 239.3,107.6 239.5,142.9 239.8,130.9 240.1,148.3 240.4,99.9 240.6,120.5 240.9,145.6 241.2,139.7 241.5,145.0 241.8,135.6 242.0,121.8 242.3,94.6 242.6,162.7 242.9,96.5 243.2,97.1 243.4,149.6 243.7,94.6 244.0,97.7 244.3,102.1 244.5,150.9 244.8,131.1 245.1,106.0 245.4,112.7 245.7,166.8 245.9,104.1 246.2,141.3 246.5,140.7 246.8,143.3 247.1,157.5 247.3,146.1 247.6,161.8 247.9,89.4 248.2,144.8 248.4,148.7 248.7,146.3 249.0,104.6 249.3,134.0 249.6,99.0 249.8,148.3 250.1,107.1 250.4,124.9 250.7,92.7 251.0,149.9 251.2,151.7 251.5,106.1 251.8,158.8 252.1,105.3 252.3,97.2 252.6,152.0 252.9,142.5 253.2,131.8 253.5,108.6 253.7,96.1 254.0,119.3 254.3,116.7 254.6,102.1 254.9,155.7 255.1,96.9 255.4,100.2 255.7,136.5 256.0,121.1 256.2,106.7 256.5,115.7 256.8,165.0 257.1,148.3 257.4,151.2 257.6,160.5 257.9,127.9 258.2,114.9 258.5,121.2 258.8,103.1 259.0,124.3 259.3,131.2 259.6,162.1 259.9,90.3 260.1,112.5 260.4,99.1 260.7,94.3 261.0,155.5 261.3,106.9 261.5,134.6 261.8,102.6 262.1,160.5 262.4,110.7 262.6,120.4 262.9,138.0 263.2,152.5 263.5,120.9 263.8,168.7 264.0,140.5 264.3,163.0 264.6,142.1 264.9,142.8 265.2,119.4 265.4,105.2 265.7,111.3 266.0,133.8 266.3,102.6 266.5,110.7 266.8,125.2 267.1,105.1 267.4,97.7 267.7,133.2 267.9,93.9 268.2,111.9 268.5,139.4 268.8,123.2 269.1,102.6 269.3,127.0 269.6,96.4 269.9,129.0 270.2,113.1 270.4,96.2 270.7,97.7 271.0,110.0 271.3,105.2 271.6,106.1 271.8,122.0 272.1,130.8 272.4,95.4 272.7,145.4 273.0,152.8 273.2,136.9 273.5,138.4 273.8,98.3 274.1,126.5 274.3,96.0 274.6,122.7 274.9,154.9 275.2,94.3 275.5,99.3 275.7,160.3 276.0,95.9 276.3,130.7 276.6,151.7 276.9,144.6 277.1,108.2 277.4,153.0 277.7,123.3 278.0,125.2 278.2,125.6 278.5,157.0 278.8,96.2 279.1,122.7 279.4,114.1 279.6,121.6 279.9,143.7 280.2,107.8 280.5,138.6 280.8,90.7 281.0,147.8 281.3,161.9 281.6,131.9 281.9,148.0 282.1,95.2 282.4,146.7 282.7,95.5 283.0,158.9 283.3,146.8 283.5,137.2 283.8,100.9 284.1,115.4 284.4,126.4 284.7,130.6 284.9,105.0 285.2,156.2 285.5,112.8 285.8,134.0 286.0,128.5 286.3,102.1 286.6,138.1 286.9,146.0 287.2,146.1 287.4,151.5 287.7,156.9 288.0,148.3 288.3,113.8 288.6,133.0 288.8,104.6 289.1,91.6 289.4,106.6 289.7,103.7 289.9,151.0 290.2,103.5 290.5,156.4 290.8,161.3 291.1,163.2 291.3,136.5 291.6,101.8 291.9,158.6 292.2,129.5 292.5,123.5 292.7,100.3 293.0,119.4 293.3,146.0 293.6,140.4 293.8,123.5 294.1,107.1 294.4,97.5 294.7,125.0 295.0,149.2 295.2,153.9 295.5,161.9 295.8,147.1 296.1,130.8 296.4,152.6 296.6,122.0 296.9,129.6 297.2,100.9 297.5,126.0 297.7,115.4 298.0,132.1 298.3,108.0 298.6,95.9 298.9,160.2 299.1,94.8 299.4,122.7 299.7,84.9 300.0,142.4 300.3,140.7 300.5,116.7 300.8,137.4 301.1,112.6 301.4,95.7 301.6,141.3 301.9,97.5 302.2,136.7 302.5,94.6 302.8,90.3 303.0,125.7 303.3,141.6 303.6,93.6 303.9,92.9 304.2,98.1 304.4,97.5 304.7,96.0 305.0,131.7 305.3,140.7 305.5,162.6 305.8,134.2 306.1,145.6" fill="none" stroke="#4a5ca2" stroke-width="1.3" stroke-linejoin="round"/><polyline points="0.0,156.9 0.3,125.5 0.6,110.0 0.8,162.9 1.1,156.6 1.4,94.2 1.7,154.4 1.9,141.7 2.2,91.8 2.5,116.7 2.8,139.7 3.1,125.1 3.3,116.4 3.6,152.6 3.9,153.3 4.2,107.5 4.5,116.2 4.7,129.6 5.0,95.4 5.3,118.9 5.6,90.7 5.8,152.7 6.1,130.6 6.4,130.8 6.7,136.9 7.0,122.9 7.2,148.2 7.5,100.0 7.8,99.7 8.1,159.1 8.4,133.1 8.6,148.3 8.9,155.6 9.2,106.4 9.5,134.1 9.7,148.6 10.0,114.3 10.3,154.5 10.6,102.8 10.9,147.5 11.1,156.9 11.4,144.0 11.7,140.2 12.0,139.1 12.3,92.1 12.5,110.8 12.8,136.9 13.1,158.7 13.4,157.7 13.6,95.7 13.9,128.8 14.2,106.5 14.5,157.9 14.8,171.6 15.0,104.1 15.3,118.4 15.6,133.0 15.9,136.4 16.2,141.1 16.4,142.2 16.7,152.6 17.0,97.9 17.3,139.7 17.5,149.0 17.8,106.0 18.1,152.8 18.4,154.6 18.7,117.1 18.9,102.3 19.2,160.3 19.5,106.9 19.8,148.6 20.1,158.2 20.3,157.4 20.6,154.7 20.9,108.2 21.2,139.8 21.4,105.1 21.7,145.0 22.0,141.3 22.3,146.1 22.6,94.7 22.8,89.9 23.1,146.8 23.4,126.1 23.7,151.0 24.0,112.3 24.2,158.2 24.5,161.6 24.8,133.4 25.1,141.6 25.3,110.1 25.6,110.1 25.9,126.7 26.2,128.9 26.5,114.3 26.7,112.0 27.0,91.4 27.3,157.4 27.6,106.8 27.9,155.9 28.1,118.2 28.4,103.3 28.7,97.3 29.0,103.5 29.2,154.5 29.5,128.3 29.8,140.8 30.1,95.7 30.4,166.3 30.6,161.2 30.9,140.9 31.2,153.7 31.5,99.1 31.8,116.4 32.0,154.0 32.3,132.2 32.6,158.3 32.9,116.4 33.1,157.4 33.4,155.2 33.7,162.1 34.0,124.4 34.3,121.5 34.5,143.2 34.8,123.9 35.1,146.3 35.4,155.1 35.7,148.4 35.9,118.2 36.2,101.0 36.5,158.2 36.8,159.3 37.0,130.4 37.3,110.0 37.6,100.4 37.9,110.5 38.2,164.6 38.4,105.2 38.7,122.1 39.0,153.2 39.3,127.7 39.6,156.0 39.8,103.0 40.1,116.0 40.4,100.3 40.7,111.2 40.9,142.6 41.2,102.2 41.5,148.0 41.8,160.1 42.1,131.6 42.3,135.6 42.6,149.2 42.9,127.3 43.2,114.0 43.5,147.8 43.7,134.1 44.0,133.3 44.3,98.0 44.6,130.9 44.8,109.3 45.1,133.5 45.4,119.9 45.7,108.7 46.0,125.9 46.2,152.2 46.5,91.6 46.8,152.4 47.1,149.3 47.3,126.4 47.6,158.3 47.9,152.3 48.2,102.7 48.5,102.1 48.7,113.5 49.0,100.0 49.3,117.7 49.6,138.5 49.9,107.4 50.1,125.9 50.4,109.3 50.7,136.6 51.0,143.5 51.2,93.5 51.5,111.1 51.8,105.0 52.1,128.4 52.4,103.4 52.6,137.4 52.9,123.6 53.2,158.4 53.5,126.7 53.8,118.5 54.0,117.8 54.3,103.5 54.6,128.3 54.9,102.9 55.1,152.8 55.4,97.3 55.7,131.5 56.0,160.3 56.3,118.4 56.5,133.4 56.8,139.2 57.1,111.7 57.4,154.0 57.7,124.9 57.9,119.0 58.2,126.2 58.5,129.3 58.8,155.8 59.0,113.7 59.3,107.4 59.6,152.3 59.9,164.0 60.2,158.2 60.4,131.0 60.7,90.4 61.0,165.3 61.3,94.6 61.6,113.7 61.8,157.2 62.1,135.1 62.4,154.2 62.7,129.8 62.9,125.2 63.2,135.5 63.5,148.7 63.8,112.9 64.1,106.4 64.3,132.0 64.6,127.8 64.9,104.3 65.2,96.9 65.5,154.7 65.7,161.5 66.0,130.3 66.3,125.7 66.6,151.3 66.8,152.6 67.1,149.9 67.4,137.3 67.7,112.3 68.0,133.8 68.2,160.3 68.5,158.0 68.8,138.9 69.1,97.2 69.4,98.1 69.6,134.7 69.9,104.7 70.2,108.0 70.5,129.3 70.7,105.6 71.0,138.6 71.3,154.8 71.6,123.8 71.9,157.2 72.1,118.8 72.4,118.3 72.7,94.7 73.0,141.9 73.3,156.5 73.5,101.1 73.8,99.8 74.1,104.6 74.4,112.2 74.6,110.2 74.9,131.9 75.2,142.6 75.5,148.3 75.8,134.5 76.0,138.5 76.3,104.9 76.6,119.2 76.9,137.5 77.2,96.1 77.4,149.9 77.7,141.1 78.0,155.7 78.3,100.7 78.5,117.3 78.8,144.5 79.1,141.6 79.4,120.3 79.7,146.4 79.9,140.2 80.2,163.9 80.5,131.5 80.8,109.7 81.1,129.9 81.3,106.6 81.6,93.6 81.9,97.0 82.2,113.5 82.4,136.8 82.7,128.4 83.0,128.6 83.3,137.2 83.6,161.9 83.8,96.5 84.1,137.9 84.4,151.8 84.7,121.4 85.0,122.2 85.2,123.8 85.5,135.5 85.8,116.4 86.1,157.7 86.3,167.3 86.6,128.3 86.9,125.3 87.2,108.5 87.5,139.6 87.7,110.5 88.0,156.8 88.3,161.1 88.6,121.0 88.8,138.9 89.1,159.1 89.4,150.5 89.7,144.1 90.0,137.6 90.2,121.8 90.5,99.2 90.8,140.9 91.1,156.2 91.4,123.7 91.6,163.1 91.9,129.0 92.2,135.0 92.5,144.2 92.7,155.1 93.0,126.8 93.3,114.9 93.6,112.2 93.9,104.3 94.1,131.4 94.4,112.7 94.7,140.4 95.0,159.0 95.3,103.1 95.5,117.2 95.8,98.9 96.1,100.7 96.4,91.3 96.6,155.9 96.9,153.0 97.2,142.0 97.5,137.2 97.8,124.9 98.0,126.2 98.3,122.2 98.6,95.1 98.9,149.2 99.2,109.0 99.4,149.0 99.7,152.4 100.0,109.7 100.3,115.6 100.5,122.4 100.8,139.1 101.1,124.0 101.4,135.0 101.7,163.6 101.9,141.1 102.2,162.2 102.5,103.4 102.8,150.5 103.1,94.3 103.3,154.1 103.6,132.4 103.9,118.2 104.2,141.9 104.4,131.7 104.7,158.1 105.0,122.6 105.3,158.6 105.6,145.4 105.8,97.0 106.1,149.5 106.4,151.7 106.7,112.5 107.0,98.4 107.2,133.5 107.5,133.6 107.8,118.7 108.1,102.9 108.3,113.1 108.6,144.4 108.9,148.5 109.2,116.4 109.5,104.6 109.7,103.7 110.0,103.4 110.3,144.1 110.6,154.6 110.9,104.4 111.1,105.8 111.4,109.6 111.7,106.2 112.0,144.0 112.2,145.5 112.5,127.8 112.8,124.0 113.1,109.5 113.4,96.5 113.6,100.8 113.9,131.9 114.2,132.5 114.5,89.9 114.8,135.8 115.0,104.3 115.3,164.8 115.6,140.3 115.9,131.1 116.1,112.5 116.4,99.5 116.7,146.0 117.0,121.6 117.3,121.0 117.5,161.8 117.8,102.7 118.1,127.2 118.4,93.9 118.7,148.4 118.9,123.1 119.2,135.5 119.5,116.5 119.8,118.3 120.0,114.3 120.3,141.0 120.6,121.6 120.9,136.8 121.2,102.5 121.4,133.7 121.7,135.2 122.0,145.3 122.3,149.5 122.6,98.6 122.8,133.1 123.1,102.1 123.4,112.5 123.7,93.7 123.9,146.4 124.2,100.3 124.5,106.6 124.8,104.9 125.1,106.6 125.3,104.7 125.6,129.8 125.9,111.6 126.2,154.4 126.5,163.9 126.7,111.4 127.0,123.7 127.3,101.4 127.6,146.3 127.8,106.7 128.1,95.6 128.4,106.6 128.7,103.6 129.0,152.5 129.2,160.9 129.5,153.4 129.8,142.5 130.1,160.2 130.4,151.2 130.6,162.3 130.9,98.0 131.2,144.9 131.5,123.2 131.7,127.5 132.0,107.3 132.3,108.3 132.6,136.0 132.9,123.6 133.1,155.0 133.4,132.8 133.7,150.5 134.0,139.2 134.2,138.1 134.5,123.6 134.8,147.9 135.1,136.0 135.4,102.3 135.6,160.4 135.9,160.9 136.2,158.1 136.5,107.0 136.8,115.6 137.0,123.1 137.3,96.5 137.6,157.0 137.9,94.0 138.1,142.2 138.4,128.2 138.7,117.5 139.0,103.1 139.3,148.1 139.5,132.5 139.8,160.8 140.1,133.4 140.4,92.1 140.7,96.9 140.9,130.0 141.2,103.2 141.5,107.1 141.8,137.3 142.0,101.1 142.3,118.1 142.6,161.2 142.9,117.1 143.2,115.3 143.4,125.7 143.7,116.7 144.0,151.3 144.3,109.8 144.6,108.2 144.8,118.7 145.1,101.8 145.4,134.3 145.7,109.4 145.9,142.2 146.2,99.3 146.5,134.4 146.8,103.1 147.1,136.9 147.3,113.8 147.6,108.6 147.9,103.0 148.2,126.4 148.5,97.2 148.7,154.2 149.0,145.7 149.3,126.5 149.6,95.2 149.8,105.6 150.1,138.0 150.4,149.0 150.7,124.6 151.0,127.6 151.2,125.9 151.5,112.7 151.8,145.0 152.1,92.8 152.4,155.7 152.6,160.3 152.9,129.3 153.2,88.8 153.5,156.0 153.7,142.0 154.0,92.9 154.3,143.2 154.6,99.0 154.9,159.6 155.1,101.1 155.4,147.7 155.7,144.1 156.0,117.4 156.3,96.6 156.5,93.2 156.8,117.4 157.1,108.2 157.4,92.3 157.6,123.9 157.9,154.1 158.2,102.0 158.5,142.5 158.8,121.7 159.0,134.8 159.3,161.6 159.6,166.6 159.9,148.0 160.2,105.6 160.4,109.3 160.7,93.6 161.0,107.8 161.3,89.1 161.5,116.5 161.8,118.9 162.1,116.0 162.4,158.9 162.7,154.9 162.9,107.8 163.2,148.0 163.5,105.9 163.8,137.0 164.1,167.4 164.3,116.5 164.6,133.3 164.9,155.9 165.2,148.6 165.4,154.8 165.7,147.9 166.0,103.7 166.3,156.3 166.6,135.0 166.8,130.2 167.1,99.9 167.4,157.1 167.7,158.3 168.0,150.7 168.2,152.2 168.5,155.4 168.8,157.4 169.1,147.1 169.3,149.1 169.6,117.3 169.9,115.4 170.2,137.2 170.5,155.5 170.7,150.5 171.0,151.8 171.3,160.3 171.6,136.3 171.9,98.2 172.1,119.6 172.4,141.3 172.7,159.7 173.0,164.9 173.2,136.6 173.5,125.8 173.8,120.2 174.1,163.2 174.4,142.8 174.6,105.7 174.9,115.8 175.2,129.1 175.5,98.7 175.7,153.4 176.0,142.7 176.3,108.5 176.6,123.8 176.9,89.5 177.1,97.2 177.4,117.3 177.7,115.0 178.0,118.4 178.3,151.6 178.5,126.5 178.8,136.5 179.1,142.4 179.4,152.1 179.6,161.4 179.9,104.6 180.2,110.9 180.5,102.7 180.8,122.3 181.0,146.6 181.3,149.6 181.6,121.5 181.9,109.1 182.2,105.7 182.4,102.7 182.7,146.2 183.0,105.0 183.3,164.3 183.5,123.5 183.8,152.9 184.1,131.7 184.4,119.2 184.7,140.0 184.9,141.7 185.2,104.6 185.5,138.6 185.8,130.5 186.1,156.5 186.3,150.8 186.6,104.1 186.9,97.5 187.2,131.9 187.4,110.7 187.7,102.5 188.0,151.4 188.3,134.2 188.6,120.9 188.8,135.3 189.1,106.6 189.4,135.9 189.7,111.8 190.0,110.0 190.2,153.1 190.5,114.1 190.8,150.7 191.1,147.8 191.3,157.7 191.6,137.8 191.9,111.9 192.2,149.7 192.5,107.9 192.7,152.7 193.0,96.7 193.3,148.9 193.6,157.6 193.9,150.8 194.1,125.2 194.4,124.6 194.7,151.6 195.0,102.1 195.2,117.6 195.5,130.6 195.8,133.7 196.1,104.5 196.4,122.9 196.6,113.7 196.9,96.9 197.2,123.9 197.5,128.9 197.8,144.6 198.0,101.3 198.3,118.0 198.6,97.0 198.9,141.4 199.1,126.8 199.4,104.8 199.7,149.1 200.0,96.1 200.3,120.0 200.5,153.7 200.8,137.3 201.1,156.7 201.4,116.5 201.7,117.6 201.9,153.4 202.2,139.1 202.5,109.6 202.8,158.6 203.0,129.5 203.3,105.8 203.6,116.8 203.9,156.8 204.2,93.8 204.4,108.9 204.7,128.4 205.0,157.5 205.3,130.1 205.6,146.3 205.8,155.8 206.1,152.9 206.4,151.5 206.7,151.8 206.9,153.7 207.2,102.7 207.5,119.8 207.8,123.0 208.1,106.3 208.3,162.9 208.6,132.0 208.9,161.6 209.2,123.0 209.5,151.1 209.7,153.2 210.0,148.4 210.3,138.3 210.6,111.4 210.8,144.5 211.1,118.4 211.4,148.4 211.7,146.0 212.0,125.4 212.2,157.4 212.5,144.8 212.8,121.3 213.1,96.6 213.4,166.6 213.6,110.8 213.9,122.5 214.2,131.3 214.5,161.3 214.7,100.6 215.0,152.5 215.3,122.3 215.6,122.0 215.9,106.4 216.1,120.0 216.4,89.8 216.7,148.6 217.0,112.7 217.3,117.5 217.5,128.5 217.8,111.5 218.1,121.2 218.4,146.6 218.6,113.5 218.9,152.0 219.2,123.7 219.5,135.9 219.8,145.9 220.0,113.1 220.3,113.4 220.6,147.3 220.9,136.0 221.1,158.1 221.4,115.8 221.7,158.3 222.0,144.4 222.3,132.3 222.5,135.3 222.8,159.6 223.1,97.2 223.4,145.1 223.7,116.1 223.9,154.9 224.2,125.0 224.5,136.3 224.8,138.1 225.0,129.0 225.3,103.9 225.6,112.5 225.9,114.0 226.2,140.0 226.4,148.4 226.7,143.5 227.0,151.7 227.3,118.7 227.6,133.8 227.8,126.9 228.1,164.5 228.4,109.8 228.7,155.9 228.9,119.7 229.2,115.3 229.5,117.0 229.8,149.8 230.1,137.8 230.3,92.0 230.6,156.5 230.9,113.7 231.2,133.9 231.5,122.3 231.7,136.4 232.0,146.0 232.3,130.9 232.6,167.7 232.8,101.6 233.1,96.3 233.4,129.7 233.7,115.4 234.0,116.6 234.2,98.6 234.5,158.1 234.8,158.3 235.1,138.7 235.4,102.7 235.6,120.8 235.9,152.2 236.2,166.1 236.5,114.7 236.7,126.2 237.0,138.2 237.3,107.9 237.6,142.0 237.9,155.9 238.1,143.5 238.4,118.2 238.7,155.5 239.0,139.0 239.3,99.2 239.5,128.7 239.8,146.6 240.1,121.9 240.4,93.0 240.6,100.8 240.9,108.9 241.2,89.7 241.5,114.9 241.8,120.7 242.0,129.0 242.3,140.6 242.6,108.8 242.9,109.6 243.2,96.8 243.4,134.2 243.7,104.0 244.0,143.4 244.3,94.5 244.5,92.0 244.8,150.6 245.1,132.8 245.4,96.6 245.7,91.1 245.9,125.9 246.2,147.1 246.5,144.7 246.8,142.0 247.1,93.9 247.3,104.4 247.6,126.4 247.9,110.5 248.2,95.3 248.4,143.6 248.7,102.7 249.0,143.1 249.3,140.0 249.6,166.0 249.8,137.9 250.1,121.8 250.4,166.7 250.7,115.7 251.0,150.7 251.2,107.0 251.5,149.0 251.8,153.4 252.1,160.6 252.3,121.0 252.6,102.9 252.9,102.0 253.2,113.8 253.5,114.8 253.7,120.5 254.0,140.7 254.3,151.4 254.6,99.5 254.9,140.4 255.1,105.1 255.4,161.4 255.7,136.9 256.0,156.7 256.2,142.4 256.5,106.0 256.8,131.6 257.1,103.8 257.4,150.1 257.6,138.5 257.9,127.4 258.2,136.1 258.5,146.4 258.8,108.5 259.0,96.8 259.3,111.3 259.6,165.6 259.9,116.0 260.1,146.0 260.4,132.8 260.7,162.1 261.0,109.7 261.3,124.8 261.5,96.4 261.8,153.2 262.1,131.5 262.4,124.5 262.6,97.6 262.9,110.4 263.2,148.2 263.5,143.9 263.8,113.6 264.0,128.4 264.3,149.7 264.6,96.8 264.9,101.7 265.2,138.5 265.4,126.9 265.7,85.3 266.0,147.3 266.3,98.1 266.5,91.8 266.8,130.1 267.1,120.7 267.4,132.3 267.7,123.7 267.9,117.8 268.2,145.2 268.5,120.5 268.8,120.1 269.1,116.0 269.3,111.7 269.6,132.2 269.9,112.3 270.2,108.1 270.4,158.6 270.7,110.3 271.0,142.0 271.3,155.3 271.6,158.5 271.8,131.9 272.1,132.5 272.4,147.4 272.7,147.1 273.0,101.3 273.2,136.4 273.5,103.2 273.8,146.0 274.1,116.9 274.3,148.9 274.6,98.3 274.9,123.3 275.2,115.5 275.5,151.8 275.7,108.6 276.0,119.2 276.3,118.9 276.6,107.1 276.9,153.7 277.1,153.0 277.4,110.0 277.7,103.2 278.0,93.6 278.2,138.7 278.5,104.6 278.8,155.2 279.1,161.2 279.4,124.4 279.6,121.9 279.9,105.2 280.2,145.2 280.5,136.9 280.8,95.0 281.0,149.2 281.3,145.2 281.6,107.6 281.9,92.1 282.1,144.7 282.4,119.7 282.7,134.2 283.0,136.5 283.3,154.0 283.5,126.3 283.8,126.9 284.1,139.9 284.4,137.7 284.7,110.5 284.9,98.1 285.2,117.9 285.5,142.6 285.8,98.7 286.0,143.5 286.3,160.0 286.6,97.5 286.9,144.0 287.2,158.5 287.4,125.5 287.7,152.0 288.0,137.0 288.3,102.9 288.6,153.1 288.8,151.7 289.1,145.0 289.4,96.3 289.7,138.7 289.9,134.9 290.2,100.6 290.5,96.2 290.8,114.7 291.1,99.8 291.3,139.9 291.6,129.1 291.9,126.3 292.2,150.1 292.5,140.8 292.7,147.0 293.0,135.0 293.3,96.8 293.6,104.9 293.8,153.5 294.1,140.7 294.4,113.3 294.7,104.4 295.0,116.6 295.2,113.7 295.5,149.0 295.8,105.8 296.1,107.3 296.4,136.1 296.6,159.2 296.9,157.3 297.2,119.6 297.5,116.0 297.7,159.1 298.0,138.8 298.3,86.6 298.6,158.6 298.9,152.0 299.1,165.9 299.4,127.5 299.7,132.8 300.0,102.8 300.3,155.7 300.5,140.4 300.8,98.4 301.1,163.7 301.4,135.6 301.6,132.8 301.9,161.2 302.2,126.5 302.5,117.6 302.8,118.9 303.0,116.4 303.3,117.8 303.6,116.3 303.9,157.8 304.2,119.3 304.4,121.9 304.7,145.3 305.0,130.0 305.3,142.2 305.5,96.4 305.8,141.5 306.1,147.8" fill="none" stroke="#c03641" stroke-width="1.3" stroke-linejoin="round"/><rect x="0" y="0" width="306.1" height="257.5999999999999" fill="none" stroke="#666" stroke-width="1.6"/></svg>
<div class="t" style="left:196.89px;top:1164.05px;font-size:15px;font-family:'Liberation Serif',serif;color:#111;transform:scaleX(1.2437);transform-origin:0 0;font-weight:bold;">Scope</div>
<div class="t" style="left:42.19px;top:1199.00px;font-size:18px;font-family:'Liberation Sans',sans-serif;color:#222;">8u</div>
<div class="t" style="left:42.19px;top:1252.00px;font-size:18px;font-family:'Liberation Sans',sans-serif;color:#222;">4u</div>
<div class="t" style="left:51.69px;top:1302.50px;font-size:18px;font-family:'Liberation Sans',sans-serif;color:#222;">0</div>
<div class="t" style="left:36.16px;top:1353.60px;font-size:18px;font-family:'Liberation Sans',sans-serif;color:#222;">-4u</div>
<div class="t" style="left:36.16px;top:1406.00px;font-size:18px;font-family:'Liberation Sans',sans-serif;color:#222;">-8u</div>
<div class="t" style="left:62.48px;top:1448.00px;font-size:18px;font-family:'Liberation Sans',sans-serif;color:#222;">0</div>
<div class="t" style="left:126.72px;top:1448.00px;font-size:18px;font-family:'Liberation Sans',sans-serif;color:#222;">50m</div>
<div class="t" style="left:198.41px;top:1448.00px;font-size:18px;font-family:'Liberation Sans',sans-serif;color:#222;">100m</div>
<div class="t" style="left:275.41px;top:1448.00px;font-size:18px;font-family:'Liberation Sans',sans-serif;color:#222;">150m</div>
<div class="t" style="left:190.84px;top:1466.22px;font-size:16.8px;font-family:'Liberation Sans',sans-serif;color:#222;">Time (s)</div>
<div class="t" style="left:-69.8px;top:1303.5px;font-size:17px;color:#222;transform:rotate(-90deg) scaleX(1.005);transform-origin:89.8px 8.5px">Instantaneous Level (V)</div>
<div class="a" style="left:430px;top:110px;width:2129px;height:37px;background:#4a6b84;"></div>
<div class="a" style="left:420px;top:147px;width:10px;height:1349px;background:#4a6b84;"></div>
<div class="a" style="left:423px;top:792.5px;width:4.5px;height:4.5px;background:#c3d3e0;border-radius:50%"></div>
<div class="a" style="left:423px;top:801.5px;width:4.5px;height:4.5px;background:#c3d3e0;border-radius:50%"></div>
<div class="a" style="left:423px;top:810.5px;width:4.5px;height:4.5px;background:#c3d3e0;border-radius:50%"></div>
<svg class="a" style="left:440px;top:117px;" width="15" height="22" viewBox="0 0 15 22"><path d="M13 1.5 L2.5 11 L13 20.5" fill="none" stroke="#fff" stroke-width="3"/></svg>
<div class="t" style="left:471.06px;top:116.72px;font-size:23.5px;font-family:'Liberation Sans',sans-serif;font-weight:bold;color:#fff;">Crosstalk, One Channel Undriven</div>
<div class="a" style="left:430px;top:147px;width:572px;height:1349px;background:#b6c4ce;"></div>
<div class="a" style="left:441.4px;top:156.8px;width:208.6px;height:41px;background:linear-gradient(#a8cce6,#c9e0f0);border:2.5px solid #3f5e75;border-radius:6px"></div>
<div class="a" style="left:446px;top:161px;width:199.5px;height:32px;background:transparent;border:1.5px dotted #1e2e3a"></div>
<svg class="a" style="left:509px;top:170px;" width="17" height="17" viewBox="0 0 17 17"><path d="M0 0 L17 8.5 L0 17Z" fill="#2e4b60"/></svg>
<div class="t" style="left:535.42px;top:169.55px;font-size:19px;font-family:'Liberation Sans',sans-serif;font-weight:bold;color:#3a596f;transform:scaleX(1.0126);transform-origin:0 0;">Start</div>
<div class="a" style="left:435px;top:207px;width:562px;height:2px;background:#e6ecf0;"></div>
<div class="a" style="left:441.5px;top:223px;width:5px;height:5px;background:#111;border-radius:50%"></div>
<div class="t" style="left:453.83px;top:215.43px;font-size:19.5px;font-family:'Liberation Sans',sans-serif;font-weight:bold;color:#111;transform:scaleX(0.9811);transform-origin:0 0;">Generator</div>
<svg class="a" style="left:636.5px;top:254px;" width="20" height="20" viewBox="0 0 20 20"><circle cx="10" cy="10" r="9.5" fill="#0b5cc0"/><circle cx="10" cy="10" r="4" fill="#fff"/></svg>
<div class="t" style="left:664.56px;top:255.62px;font-size:17.5px;font-family:'Liberation Sans',sans-serif;color:#1b1f24;">High Performance Sine Generator</div>
<div class="a" style="left:684px;top:293.6px;width:20px;height:19px;background:#f5f5f5;border:1.3px solid #5f6a72;border-radius:3px"></div>
<div class="t" style="left:711.52px;top:294.54px;font-size:17.6px;font-family:'Liberation Sans',sans-serif;color:#1b1f24;transform:scaleX(1.0208);transform-origin:0 0;">Precision Tune</div>
<svg class="a" style="left:636.5px;top:334.6px;" width="20" height="20" viewBox="0 0 20 20"><circle cx="10" cy="10" r="8.8" fill="#f3f3f3" stroke="#5f6a72" stroke-width="1.3"/></svg>
<div class="t" style="left:664.57px;top:336.46px;font-size:17.1px;font-family:'Liberation Sans',sans-serif;color:#1b1f24;transform:scaleX(1.0155);transform-origin:0 0;">DAC Generator</div>
<div class="a" style="left:441px;top:380px;width:401.5px;height:112px;background:transparent;border:1.5px solid #98a7b1"></div>
<svg class="a" style="left:636px;top:394.6px;" width="20" height="20" viewBox="0 0 20 20"><rect width="20" height="20" rx="3" fill="#0b5cc0"/><path d="M5 10.5 L8.5 14 L15 6.5" fill="none" stroke="#fff" stroke-width="1.8"/></svg>
<div class="t" style="left:663.20px;top:397.05px;font-size:17px;font-family:'Liberation Sans',sans-serif;color:#1b1f24;">Levels Track Ch1</div>
<div class="t" style="left:639.23px;top:428.35px;font-size:17px;font-family:'Liberation Sans',sans-serif;color:#1b1f24;transform:scaleX(1.0504);transform-origin:0 0;">Level</div>
<div class="t" style="left:584.10px;top:460.55px;font-size:17px;font-family:'Liberation Sans',sans-serif;color:#1b1f24;transform:scaleX(1.0646);transform-origin:0 0;">Ch1:</div>
<div class="a" style="left:636px;top:452.5px;width:169px;height:33px;background:#fff;border:1px solid #9aa6ae"></div>
<div class="t" style="left:640.23px;top:460.55px;font-size:17px;font-family:'Liberation Sans',sans-serif;color:#1b1f24;">1.000 Vrms</div>
<svg class="a" style="left:784px;top:465.5px;" width="12" height="8" viewBox="0 0 12 8"><path d="M1 1 L6 6 L11 1" fill="none" stroke="#555" stroke-width="1.4"/></svg>
<svg class="a" style="left:807px;top:452.5px;" width="26" height="34" viewBox="0 0 26 34"><rect x="0.5" y="0.5" width="25" height="16" rx="3" fill="#6d8ea6" stroke="#3f5e75"/><rect x="0.5" y="17.5" width="25" height="16" rx="3" fill="#6d8ea6" stroke="#3f5e75"/><path d="M5 12 L13 4.5 L21 12Z" fill="#e8eef2"/><path d="M5 21.5 L13 29 L21 21.5Z" fill="#e8eef2"/></svg>
<div class="t" style="left:532.53px;top:505.98px;font-size:17.2px;font-family:'Liberation Sans',sans-serif;color:#1b1f24;transform:scaleX(1.0352);transform-origin:0 0;">Frequency:</div>
<div class="a" style="left:636px;top:497px;width:169px;height:33px;background:#fff;border:1px solid #9aa6ae"></div>
<div class="t" style="left:640.23px;top:505.05px;font-size:17px;font-family:'Liberation Sans',sans-serif;color:#1b1f24;">1.00000 kHz</div>
<svg class="a" style="left:784px;top:510px;" width="12" height="8" viewBox="0 0 12 8"><path d="M1 1 L6 6 L11 1" fill="none" stroke="#555" stroke-width="1.4"/></svg>
<svg class="a" style="left:807px;top:497px;" width="26" height="34" viewBox="0 0 26 34"><rect x="0.5" y="0.5" width="25" height="16" rx="3" fill="#6d8ea6" stroke="#3f5e75"/><rect x="0.5" y="17.5" width="25" height="16" rx="3" fill="#6d8ea6" stroke="#3f5e75"/><path d="M5 12 L13 4.5 L21 12Z" fill="#e8eef2"/><path d="M5 21.5 L13 29 L21 21.5Z" fill="#e8eef2"/></svg>
<div class="t" style="left:440.46px;top:553.87px;font-size:17.8px;font-family:'Liberation Sans',sans-serif;color:#1b1f24;transform:scaleX(1.0586);transform-origin:0 0;">Channels:</div>
<svg class="a" style="left:436.8px;top:587px;" width="45" height="24" viewBox="0 0 45 24"><rect x="0.5" y="0.5" width="21" height="23" rx="3" fill="#6a8ba3" stroke="#3f5e75"/><rect x="23.5" y="0.5" width="21" height="23" rx="3" fill="#6a8ba3" stroke="#3f5e75"/><text x="7" y="18" font-family="Liberation Sans" font-weight="bold" font-size="14" fill="#fff">1</text><text x="29" y="18" font-family="Liberation Sans" font-weight="bold" font-size="14" fill="#fff">2</text></svg>
<div class="a" style="left:435px;top:621px;width:562px;height:2px;background:#e6ecf0;"></div>
<div class="a" style="left:439.6px;top:630px;width:184.4px;height:31.6px;background:#fff;border:1px solid #d0d8dd;border-radius:4px"></div>
<div class="t" style="left:449.96px;top:637.83px;font-size:17.5px;font-family:'Liberation Sans',sans-serif;color:#1b1f24;transform:scaleX(1.0132);transform-origin:0 0;">Advanced Settings...</div>
<div class="a" style="left:1002px;top:147px;width:1557px;height:37px;background:#dde3e7;"></div>
<svg class="a" style="left:1005px;top:153.6px;" width="23.5" height="23.5" viewBox="0 0 24 24"><rect width="24" height="24" fill="#2c4a5e"/><path d="M3 3 H7 V9 H16 V3 H18 L21 6 V21 H3Z" fill="#fff"/><rect x="12" y="4" width="2.5" height="3" fill="#fff"/><path d="M8 12 H16 V15 H19 L12 21 L5 15 H8Z" fill="#2c4a5e"/><path d="M10 13 H14 V16 H16 L12 19.5 L8 16 H10Z" fill="#fff"/></svg>
<svg class="a" style="left:1031px;top:163px;" width="9" height="6" viewBox="0 0 9 6"><path d="M0 0H9L4.5 6Z" fill="#111"/></svg>
<svg class="a" style="left:1049.8px;top:153.6px;" width="23.5" height="23.5" viewBox="0 0 24 24"><rect width="24" height="24" fill="#2c4a5e"/><path d="M3 7 L7.5 2.5 H15 V9 H10 V17 H3Z" fill="#fff"/><path d="M3.5 7.5 H8 V3" fill="none" stroke="#2c4a5e" stroke-width="1"/><path d="M11 10 H21 V22 H11Z" fill="#fff"/><path d="M12 12 L16 8" stroke="#2c4a5e" stroke-width="1.3"/></svg>
<svg class="a" style="left:1084px;top:153.6px;" width="23.5" height="23.5" viewBox="0 0 24 24"><rect width="24" height="24" fill="#2c4a5e"/><path d="M6 3 H18 V9 H6Z" fill="#fff"/><path d="M2 9 H22 V17 H2Z" fill="#fff"/><rect x="5" y="13" width="14" height="2" fill="#2c4a5e"/><path d="M5 17 H19 L18 21 H6Z" fill="#fff"/><rect x="18" y="10.5" width="2" height="1.2" fill="#2c4a5e"/></svg>
<div class="a" style="left:1119.5px;top:156px;width:1.5px;height:22px;background:#f5f7f8;"></div>
<svg class="a" style="left:1128px;top:153.6px;" width="23.5" height="23.5" viewBox="0 0 24 24"><rect width="24" height="24" fill="#2c4a5e"/><circle cx="9.5" cy="9.5" r="6.5" fill="none" stroke="#fff" stroke-width="1.8"/><path d="M14.5 14.5 L21 21" stroke="#fff" stroke-width="2.4"/><path d="M9.5 6V13M6 9.5H13" stroke="#fff" stroke-width="1.6"/></svg>
<svg class="a" style="left:1162.7px;top:153.6px;" width="23.5" height="23.5" viewBox="0 0 24 24"><rect width="24" height="24" fill="#2c4a5e"/><path d="M12 2 L15 6 H13 V11 H18 V9 L22 12 L18 15 V13 H13 V18 H15 L12 22 L9 18 H11 V13 H6 V15 L2 12 L6 9 V11 H11 V6 H9Z" fill="#fff"/></svg>
<svg class="a" style="left:1197px;top:153.6px;" width="23.5" height="23.5" viewBox="0 0 24 24"><rect width="24" height="24" fill="#2c4a5e"/><path d="M3 3 H9 L7 5 L10.5 8.5 L8.5 10.5 L5 7 L3 9Z M21 3 V9 L19 7 L15.5 10.5 L13.5 8.5 L17 5 L15 3Z M3 21 V15 L5 17 L8.5 13.5 L10.5 15.5 L7 19 L9 21Z M21 21 H15 L17 19 L13.5 15.5 L15.5 13.5 L19 17 L21 15Z" fill="#fff"/></svg>
<div class="a" style="left:1232px;top:156px;width:1.5px;height:22px;background:#f5f7f8;"></div>
<svg class="a" style="left:1240.5px;top:153.6px;" width="23.5" height="23.5" viewBox="0 0 24 24"><rect width="24" height="24" fill="#2c4a5e"/><rect x="2" y="3" width="20" height="3" fill="#fff"/><path d="M2 6V21H22V6 M2 10H22M2 14H22M2 18H22 M7 6V21 M12 6V21 M17 6V21" fill="none" stroke="#fff" stroke-width="1.1"/></svg>
<svg class="a" style="left:1273.4px;top:153.6px;" width="23.5" height="23.5" viewBox="0 0 24 24"><rect width="24" height="24" fill="#2c4a5e"/><rect x="2" y="5" width="20" height="2" fill="#fff"/><rect x="2" y="17" width="20" height="2.5" fill="#fff"/><path d="M2 7H22V17H2Z" fill="#4b6a90"/><path d="M2 17 L8 10 L12 14 L22 7 V17Z" fill="#7d9fb8"/><path d="M2 17 L8 10 L12 14 L22 7" fill="none" stroke="#fff" stroke-width="1"/></svg>
<svg class="a" style="left:1301px;top:162px;" width="9" height="6" viewBox="0 0 9 6"><path d="M0 0H9L4.5 6Z" fill="#111"/></svg>
<svg class="a" style="left:1318.4px;top:153.6px;" width="23.5" height="23.5" viewBox="0 0 24 24"><rect width="24" height="24" fill="#2c4a5e"/><text x="5" y="17" font-family="Liberation Serif" font-style="italic" font-size="15" fill="#fff">f</text><text x="11" y="19" font-family="Liberation Sans" font-size="10" fill="#fff">x</text></svg>
<svg class="a" style="left:1353px;top:153.6px;" width="23.5" height="23.5" viewBox="0 0 24 24"><rect width="24" height="24" fill="#2c4a5e"/><path d="M20.49 11.58L20.41 13.25L17.65 14.02L17.15 15.08L18.30 17.71L17.06 18.83L14.57 17.42L13.46 17.82L12.42 20.49L10.75 20.41L9.98 17.65L8.92 17.15L6.29 18.30L5.17 17.06L6.58 14.57L6.18 13.46L3.51 12.42L3.59 10.75L6.35 9.98L6.85 8.92L5.70 6.29L6.94 5.17L9.43 6.58L10.54 6.18L11.58 3.51L13.25 3.59L14.02 6.35L15.08 6.85L17.71 5.70L18.83 6.94L17.42 9.43L17.82 10.54Z" fill="#fff"/><circle cx="12" cy="12" r="5.88" fill="#fff"/><circle cx="12" cy="12" r="2.6" fill="#2c4a5e"/></svg>
<div class="a" style="left:1388px;top:156px;width:1.5px;height:22px;background:#f5f7f8;"></div>
<div class="t" style="left:1395.73px;top:155.15px;font-size:19px;font-family:'Liberation Sans',sans-serif;color:#222;transform:scaleX(1.0635);transform-origin:0 0;">Unit</div>
<div class="a" style="left:1440px;top:147.5px;width:76px;height:36.5px;background:#fff;"></div>
<div class="a" style="left:1499px;top:147.5px;width:17px;height:36.5px;background:#f7f7f7;"></div>
<div class="t" style="left:1445.99px;top:155.35px;font-size:19px;font-family:'Liberation Sans',sans-serif;color:#222;">dB</div>
<svg class="a" style="left:1502.6px;top:164px;" width="9" height="5" viewBox="0 0 9 5"><path d="M0 0H9L4.5 5Z" fill="#111"/></svg>
<svg class="a" style="left:2532px;top:157px;" width="19" height="18" viewBox="0 0 19 18"><path d="M7 2 H1.8 V16.2 H16 V11" fill="none" stroke="#2a5398" stroke-width="2.8"/><path d="M8 10 L15.5 2.5 M10 2 H16.5 V8.5" fill="none" stroke="#2a5398" stroke-width="2.8"/></svg>
<div class="a" style="left:1002px;top:184px;width:1557px;height:1158px;background:#fff;"></div>
<div class="t" style="left:1623.12px;top:187.05px;font-size:15px;font-family:'Liberation Serif',serif;color:#111;transform:scaleX(1.4627);transform-origin:0 0;font-weight:bold;">Crosstalk</div>
<div class="t" style="left:2012.07px;top:209.94px;font-size:18.3px;font-family:'Liberation Sans',sans-serif;color:#333;transform:scaleX(1.0130);transform-origin:0 0;">2025/10/9 17:02:27.767</div>
<svg class="a" style="left:1122.5px;top:233.5px;" width="1088.0" height="1015.5" viewBox="0 0 1088.0 1015.5"><line x1="90.67" y1="0" x2="90.67" y2="1015.5" stroke="#e8e8e8" stroke-width="1.3"/><line x1="181.33" y1="0" x2="181.33" y2="1015.5" stroke="#d2d2d2" stroke-width="1.3"/><line x1="272.00" y1="0" x2="272.00" y2="1015.5" stroke="#e8e8e8" stroke-width="1.3"/><line x1="362.67" y1="0" x2="362.67" y2="1015.5" stroke="#d2d2d2" stroke-width="1.3"/><line x1="453.33" y1="0" x2="453.33" y2="1015.5" stroke="#e8e8e8" stroke-width="1.3"/><line x1="544.00" y1="0" x2="544.00" y2="1015.5" stroke="#d2d2d2" stroke-width="1.3"/><line x1="634.67" y1="0" x2="634.67" y2="1015.5" stroke="#e8e8e8" stroke-width="1.3"/><line x1="725.33" y1="0" x2="725.33" y2="1015.5" stroke="#d2d2d2" stroke-width="1.3"/><line x1="816.00" y1="0" x2="816.00" y2="1015.5" stroke="#e8e8e8" stroke-width="1.3"/><line x1="906.67" y1="0" x2="906.67" y2="1015.5" stroke="#d2d2d2" stroke-width="1.3"/><line x1="997.33" y1="0" x2="997.33" y2="1015.5" stroke="#e8e8e8" stroke-width="1.3"/><line x1="0" y1="304.5" x2="1088.0" y2="304.5" stroke="#d6d6d6" stroke-width="1.5"/><line x1="0" y1="711.0" x2="1088.0" y2="711.0" stroke="#d6d6d6" stroke-width="1.5"/><rect x="0" y="0" width="1088.0" height="1015.5" fill="none" stroke="#8a8a8a" stroke-width="1.6"/></svg>
<svg class="a" style="left:2163px;top:245px;" width="36.0" height="36.0" viewBox="0 0 36 36"><path d="M5 0.8 C21 0.5 33.5 8 33.5 17.5 C33.5 27.5 18 34.5 0 33.8 C16 32.5 29.5 26.5 30 17.5 C30.5 9 20 2.5 5 0.8Z" fill="#1f6aa8"/><text x="-5" y="25.5" font-family="Liberation Sans" font-weight="bold" font-style="italic" font-size="20" fill="#0f3057" textLength="28" lengthAdjust="spacingAndGlyphs">AP</text></svg>
<div class="t" style="left:1025.27px;top:513.92px;font-size:49.5px;font-family:'Liberation Sans',sans-serif;color:#111;transform:scaleX(0.9024);transform-origin:0 0;">Ch1</div>
<div class="t" style="left:1025.22px;top:920.22px;font-size:49.5px;font-family:'Liberation Sans',sans-serif;color:#111;transform:scaleX(0.9212);transform-origin:0 0;">Ch2</div>
<div class="a" style="left:2214.7px;top:526.4px;width:24.7px;height:24.1px;background:#4a64a8;"></div>
<div class="a" style="left:2214.7px;top:933.4px;width:24.7px;height:24.1px;background:#d45252;"></div>
<div class="t" style="left:2278.49px;top:514.68px;font-size:50.5px;font-family:'Liberation Sans',sans-serif;color:#111;transform:scaleX(0.9741);transform-origin:0 0;">-136.213 dB</div>
<div class="t" style="left:2278.49px;top:920.68px;font-size:50.5px;font-family:'Liberation Sans',sans-serif;color:#111;transform:scaleX(0.9741);transform-origin:0 0;">-136.208 dB</div>
<div class="t" style="left:1073.31px;top:1263.08px;font-size:50.5px;font-family:'Liberation Sans',sans-serif;color:#111;">-120</div>
<div class="t" style="left:1254.31px;top:1263.08px;font-size:50.5px;font-family:'Liberation Sans',sans-serif;color:#111;">-100</div>
<div class="t" style="left:1449.72px;top:1263.08px;font-size:50.5px;font-family:'Liberation Sans',sans-serif;color:#111;">-80</div>
<div class="t" style="left:1629.82px;top:1263.08px;font-size:50.5px;font-family:'Liberation Sans',sans-serif;color:#111;">-60</div>
<div class="t" style="left:1811.32px;top:1263.08px;font-size:50.5px;font-family:'Liberation Sans',sans-serif;color:#111;">-40</div>
<div class="t" style="left:1992.82px;top:1263.08px;font-size:50.5px;font-family:'Liberation Sans',sans-serif;color:#111;">-20</div>
<div class="t" style="left:2195.12px;top:1263.08px;font-size:50.5px;font-family:'Liberation Sans',sans-serif;color:#111;">0</div>
<div class="t" style="left:1609.64px;top:1319.12px;font-size:17.5px;font-family:'Liberation Sans',sans-serif;color:#333;transform:scaleX(0.9822);transform-origin:0 0;">Crosstalk (dB)</div>
<div class="a" style="left:1002px;top:1342.5px;width:1557px;height:37.5px;background:#dde3e7;"></div>
<svg class="a" style="left:1007px;top:1349px;" width="23.3" height="23.3" viewBox="0 0 24 24"><rect width="24" height="24" fill="#a9a9a9"/><rect x="5" y="4" width="3" height="16" fill="#e9e9e9"/><path d="M19 4 V20 L9 12Z" fill="#e9e9e9"/></svg>
<svg class="a" style="left:1041.3px;top:1349px;" width="23.3" height="23.3" viewBox="0 0 24 24"><rect width="24" height="24" fill="#a9a9a9"/><rect x="16" y="4" width="3" height="16" fill="#e9e9e9"/><path d="M5 4 V20 L15 12Z" fill="#e9e9e9"/></svg>
<div class="a" style="left:1076.5px;top:1349px;width:1.5px;height:24px;background:#f5f7f8;"></div>
<svg class="a" style="left:1083px;top:1349px;" width="23.5" height="23.5" viewBox="0 0 24 24"><rect width="24" height="24" fill="#2c4a5e"/><path d="M12 3V21M3 12H21" stroke="#fff" stroke-width="3.4"/></svg>
<div class="t" style="left:1112.15px;top:1350.35px;font-size:19px;font-family:'Liberation Sans',sans-serif;color:#1b1f24;transform:scaleX(1.0449);transform-origin:0 0;">Add</div>
<svg class="a" style="left:1158px;top:1359.6px;" width="8" height="5" viewBox="0 0 8 5"><path d="M0 0H8L4 5Z" fill="#111"/></svg>
<svg class="a" style="left:1174.5px;top:1349px;" width="23.5" height="23.5" viewBox="0 0 24 24"><rect width="24" height="24" fill="#2c4a5e"/><rect y="16" width="24" height="8" fill="#38557a"/><path d="M5 5 L19 19 M19 5 L5 19" stroke="#fff" stroke-width="3.2"/></svg>
<div class="t" style="left:1202.40px;top:1350.35px;font-size:19px;font-family:'Liberation Sans',sans-serif;color:#1b1f24;transform:scaleX(1.0184);transform-origin:0 0;">Delete</div>
<svg class="a" style="left:1268px;top:1359.6px;" width="8" height="5" viewBox="0 0 8 5"><path d="M0 0H8L4 5Z" fill="#111"/></svg>
<svg class="a" style="left:1286px;top:1349px;" width="23.5" height="23.5" viewBox="0 0 24 24"><rect width="24" height="24" fill="#2c4a5e"/><path d="M6 3 L9.5 7 H7 V14 H5 V7 H2.5Z" fill="#fff"/><text x="12.5" y="10" font-family="Liberation Sans" font-weight="bold" font-size="9" fill="#fff">9</text><text x="3" y="21.5" font-family="Liberation Sans" font-weight="bold" font-size="9" fill="#fff">1</text><path d="M13 14 H21 L17 19Z" fill="#fff"/></svg>
<div class="t" style="left:1313.83px;top:1350.35px;font-size:19px;font-family:'Liberation Sans',sans-serif;color:#1b1f24;transform:scaleX(1.0144);transform-origin:0 0;">Sort By</div>
<svg class="a" style="left:1387px;top:1359.6px;" width="8" height="5" viewBox="0 0 8 5"><path d="M0 0H8L4 5Z" fill="#111"/></svg>
<svg class="a" style="left:1404px;top:1349px;" width="23.5" height="23.5" viewBox="0 0 24 24"><rect width="24" height="24" fill="#2c4a5e"/><path d="M20.49 11.58L20.41 13.25L17.65 14.02L17.15 15.08L18.30 17.71L17.06 18.83L14.57 17.42L13.46 17.82L12.42 20.49L10.75 20.41L9.98 17.65L8.92 17.15L6.29 18.30L5.17 17.06L6.58 14.57L6.18 13.46L3.51 12.42L3.59 10.75L6.35 9.98L6.85 8.92L5.70 6.29L6.94 5.17L9.43 6.58L10.54 6.18L11.58 3.51L13.25 3.59L14.02 6.35L15.08 6.85L17.71 5.70L18.83 6.94L17.42 9.43L17.82 10.54Z" fill="#fff"/><circle cx="12" cy="12" r="5.88" fill="#fff"/><circle cx="12" cy="12" r="2.6" fill="#2c4a5e"/></svg>
<div class="t" style="left:1431.40px;top:1350.35px;font-size:19px;font-family:'Liberation Sans',sans-serif;color:#1b1f24;transform:scaleX(1.0204);transform-origin:0 0;">Details</div>
<svg class="a" style="left:2531px;top:1353px;" width="19" height="16" viewBox="0 0 19 16"><path d="M7 0 H12 V5 H17 L9.5 12.5 L2 5 H7Z" fill="#2f5686"/><rect x="0" y="12.5" width="19" height="3" rx="1" fill="#1f3d66"/></svg>
<div class="a" style="left:1002px;top:1380px;width:1557px;height:116px;background:#fff;"></div>
<div class="a" style="left:1032.3px;top:1388px;width:129.6px;height:79.5px;background:#fff;border:3px solid #4a6b84"></div>
<div class="a" style="left:1037px;top:1392.5px;width:120.5px;height:71px;background:#fff;border:1.5px solid #4a6b84"></div>
<svg class="a" style="left:1039px;top:1394px;" width="117" height="67" viewBox="0 0 117 67"><rect x="11" y="3.5" width="66" height="54" fill="none" stroke="#d0d0d0" stroke-width="0.8"/><line x1="11" y1="19" x2="77" y2="19" stroke="#e0e0e0" stroke-width="0.6"/><line x1="11" y1="40" x2="77" y2="40" stroke="#e0e0e0" stroke-width="0.6"/><line x1="44" y1="3.5" x2="44" y2="57.5" stroke="#e6e6e6" stroke-width="0.6"/><text x="2" y="21" font-size="5" fill="#888" font-family="Liberation Sans">Ch1</text><text x="2" y="42" font-size="5" fill="#888" font-family="Liberation Sans">Ch2</text><rect x="79" y="17.5" width="3" height="3" fill="#8a8ac0"/><rect x="79" y="38.5" width="3" height="3" fill="#e08a8a"/><text x="87" y="21" font-size="5" fill="#999" font-family="Liberation Sans">-136.213 dB</text><text x="87" y="42" font-size="5" fill="#999" font-family="Liberation Sans">-136.208 dB</text><text x="17" y="63" font-size="4.5" fill="#999" font-family="Liberation Sans">-100</text><text x="45" y="63" font-size="4.5" fill="#999" font-family="Liberation Sans">-50</text><text x="74" y="63" font-size="4.5" fill="#999" font-family="Liberation Sans">0</text></svg>
<div class="a" style="left:1008px;top:1467.5px;width:178.2px;height:25.4px;background:#4a6b84;"></div>
<div class="t" style="left:1060.95px;top:1470.88px;font-size:18.5px;font-family:'Liberation Sans',sans-serif;color:#fff;transform:scaleX(0.9242);transform-origin:0 0;">Crosstalk</div>
<div class="a" style="left:0px;top:1496px;width:2560px;height:32px;background:#efefef;border-top:1px solid #cfcfcf"></div>
<div class="t" style="left:1306.82px;top:1503.92px;font-size:19.5px;font-family:'Liberation Sans',sans-serif;color:#333;transform:scaleX(1.0575);transform-origin:0 0;">Output:</div>
<div class="a" style="left:1384.5px;top:1500.6px;width:280.29999999999995px;height:25.1px;background:#000;"></div>
<div class="t" style="left:1389.75px;top:1503.92px;font-size:19.5px;font-family:'Liberation Sans',sans-serif;color:#26c926;transform:scaleX(1.0100);transform-origin:0 0;">Analog Balanced 2 Ch, 40 ohm</div>
<div class="a" style="left:1752px;top:1500.6px;width:301.5999999999999px;height:25.1px;background:#000;"></div>
<div class="t" style="left:1755.95px;top:1503.92px;font-size:19.5px;font-family:'Liberation Sans',sans-serif;color:#26c926;transform:scaleX(1.0116);transform-origin:0 0;">Analog Balanced 2 Ch, 200 kohm</div>
<div class="a" style="left:2058px;top:1500.6px;width:126px;height:25.1px;background:#000;"></div>
<div class="t" style="left:2062.05px;top:1503.92px;font-size:19.5px;font-family:'Liberation Sans',sans-serif;color:#26c926;transform:scaleX(1.0278);transform-origin:0 0;">310.0 mVrms</div>
<div class="a" style="left:2188.5px;top:1500.6px;width:196.5px;height:25.1px;background:#000;"></div>
<div class="t" style="left:2192.35px;top:1503.92px;font-size:19.5px;font-family:'Liberation Sans',sans-serif;color:#26c926;transform:scaleX(1.0145);transform-origin:0 0;">AC (&lt;10 Hz) - 20 kHz</div>
<div class="a" style="left:2472px;top:1500.6px;width:60px;height:25.1px;background:#000;"></div>
<div class="t" style="left:2474.84px;top:1503.92px;font-size:19.5px;font-family:'Liberation Sans',sans-serif;color:#26c926;transform:scaleX(1.1547);transform-origin:0 0;">None</div>
<div class="t" style="left:1672.06px;top:1503.92px;font-size:19.5px;font-family:'Liberation Sans',sans-serif;color:#333;transform:scaleX(1.0736);transform-origin:0 0;">Input 1:</div>
<div class="t" style="left:2392.80px;top:1503.92px;font-size:19.5px;font-family:'Liberation Sans',sans-serif;color:#333;transform:scaleX(1.0541);transform-origin:0 0;">Input 2:</div>
<div class="a" style="left:0px;top:1528px;width:2560px;height:72px;background:#d9e8e1;border-top:1px solid #aab8b2"></div>
<svg class="a" style="left:29px;top:1549px;" width="36" height="32" viewBox="0 0 36 32"><circle cx="24" cy="10" r="8" fill="#f2a12a"/><path d="M6 29 Q0 29 0.5 23 Q1 17 8 17.5 Q10 10 18 11 Q25 12 26 19 Q34 18.5 35 24 Q35.5 29 30 29Z" fill="#c9dcf4" stroke="#9ab7de" stroke-width="1"/></svg>
<div class="t" style="left:76.07px;top:1543.62px;font-size:17.5px;font-family:'Liberation Sans',sans-serif;color:#1a1a1a;transform:scaleX(0.9603);transform-origin:0 0;">32°C</div>
<svg class="a" style="left:77px;top:1567px;" width="36" height="20" viewBox="0 0 36 20"><path d="M6 2 L10 0.5 L12 2.5 L6 7 M5 6 L15 3 L10 9.5 L1 12 M8 11 L17 8 L14 13 L4 18.5 M10 14 L18 12 L12 18 L2 20" fill="none" stroke="#2a2a2a" stroke-width="1.4"/><path d="M21 3.5 H33 M19 9 H35 M26 9 L20 18 H34 M31 14 L35 19" fill="none" stroke="#2a2a2a" stroke-width="1.4"/></svg>
<svg class="a" style="left:1031.8px;top:1547.3px;" width="35" height="34.3" viewBox="0 0 35 34.3"><defs><linearGradient id="wg" x1="0" y1="0" x2="1" y2="1"><stop offset="0" stop-color="#39c0f5"/><stop offset="1" stop-color="#0a6fcf"/></linearGradient></defs><rect x="0" y="0" width="16.3" height="16.3" rx="1.5" fill="url(#wg)"/><rect x="18.5" y="0" width="16.5" height="16.3" rx="1.5" fill="url(#wg)"/><rect x="0" y="18.2" width="16.3" height="16.1" rx="1.5" fill="url(#wg)"/><rect x="18.5" y="18.2" width="16.5" height="16.1" rx="1.5" fill="url(#wg)"/></svg>
<svg class="a" style="left:1097.9px;top:1547.3px;" width="36" height="34" viewBox="0 0 36 34"><rect x="9" y="0" width="26.5" height="23" rx="2" fill="#f4f4f4" stroke="#e0e0e0" stroke-width="0.8"/><rect x="0" y="9" width="27" height="24" rx="2" fill="#2e2e2e"/><rect x="9" y="9" width="18" height="14" rx="1.5" fill="#bdbdbd"/></svg>
<svg class="a" style="left:1164px;top:1547.8px;" width="36" height="33" viewBox="0 0 36 33"><path d="M0 2 Q0 0 2 0 H12 L15 3 H34 Q36 3 36 5 V8 H0Z" fill="#e2a416"/><rect x="0" y="4" width="36" height="28.5" rx="1.5" fill="#fbcd4a"/><path d="M6 33 V25 Q6 22 9 22 H27 Q30 22 30 25 V33Z" fill="#1a7fd6"/><rect x="11" y="25.5" width="14" height="2" fill="#0b4f96"/></svg>
<div class="a" style="left:1178px;top:1588px;width:9px;height:4.5px;background:#6f7572;border-radius:3px"></div>
<svg class="a" style="left:1229.5px;top:1545.7px;" width="37" height="37" viewBox="0 0 37 37"><defs><linearGradient id="eg" x1="0" y1="0" x2="1" y2="1"><stop offset="0" stop-color="#31b6e8"/><stop offset="0.6" stop-color="#3dca8b"/><stop offset="1" stop-color="#74de4e"/></linearGradient></defs><circle cx="18.5" cy="18.5" r="18" fill="url(#eg)"/><path d="M36 22 Q33 37 18 37 Q2 37 0.5 20 Q3 10 13 10 Q25 10 25 18 Q25 23 19 23 Q14 23 14 19 Q7 22 10 29 Q15 36 26 33 Q32 31 36 22Z" fill="#1170c8"/><circle cx="19.5" cy="19" r="4.5" fill="#e8f3f6"/></svg>
<svg class="a" style="left:1295.7px;top:1546px;" width="36.3" height="36.3" viewBox="0 0 36.3 36.3"><circle cx="18" cy="18" r="18" fill="#de3b2e"/><path d="M18 18 L2.4 27 A18 18 0 0 0 27 33.6Z" fill="#2a9a47"/><path d="M18 18 L27 33.6 A18 18 0 0 0 33.6 9 L18 9Z" fill="#f7c22c"/><path d="M18 18 L2.4 27 A18 18 0 0 1 4 7.5Z" fill="#2a9a47" opacity="0"/><circle cx="18" cy="18" r="8" fill="#fff"/><circle cx="18" cy="18" r="6.3" fill="#2f77e3"/></svg>
<svg class="a" style="left:1362px;top:1546px;" width="36" height="36" viewBox="0 0 36 36"><rect width="36" height="36" rx="5" fill="#f8fbfa"/><ellipse cx="18" cy="15" rx="9" ry="11" fill="#111"/><ellipse cx="18" cy="25" rx="10" ry="8.5" fill="#111"/><ellipse cx="18" cy="24" rx="6.5" ry="7" fill="#fff"/><circle cx="14.5" cy="11" r="2" fill="#fff"/><circle cx="21.5" cy="11" r="2" fill="#fff"/><ellipse cx="18" cy="15.5" rx="4.5" ry="2" fill="#f5b800"/><path d="M9 19 Q18 23 27 19 L27 22 Q18 26 9 22Z" fill="#e3262a"/><path d="M22 21 L25 28 L21 27Z" fill="#e3262a"/><ellipse cx="12" cy="33" rx="4.5" ry="2" fill="#f5b800"/><ellipse cx="24" cy="33" rx="4.5" ry="2" fill="#f5b800"/></svg>
<div class="a" style="left:1377px;top:1588px;width:9px;height:4.5px;background:#6f7572;border-radius:3px"></div>
<div class="a" style="left:1418px;top:1536px;width:56px;height:56px;background:#eaf1ee;border-radius:5px;border:1px solid #dbe3df"></div>
<div class="a" style="left:1428px;top:1546px;width:36px;height:36px;background:#fff;"></div>
<svg class="a" style="left:1428px;top:1547px;" width="36" height="34" viewBox="0 0 36 34"><path d="M16 1.5 C28 1.5 35 8 35 17 C35 27 26 33 9 33 C23 31.5 31.5 25.5 31.5 17 C31.5 9 26 3 16 1.5Z" fill="#0d3a66"/><text x="1" y="24" font-family="Liberation Sans" font-weight="bold" font-style="italic" font-size="17" fill="#0d3a66" textLength="27" lengthAdjust="spacingAndGlyphs">AP</text></svg>
<div class="a" style="left:1434.7px;top:1588px;width:23px;height:4.6px;background:#1f74c8;border-radius:3px"></div>
<svg class="a" style="left:1494.6px;top:1547px;" width="35" height="35" viewBox="0 0 35 35"><path d="M17 1 C30 1 35 10 33 18 C31 24 25 22 23 25 C21 29 25 33 18 34 C8 35 1 27 1 17 C1 8 8 1 17 1Z" fill="#3fa3e0"/><circle cx="9" cy="13" r="3" fill="#3cb34a"/><circle cx="16" cy="7.5" r="3" fill="#f5c12e"/><circle cx="8" cy="22" r="3" fill="#e8502a"/><circle cx="17" cy="19" r="2.3" fill="#e9f4fb"/><path d="M27 12 L31 12 L30 34 L28 34Z" fill="#a56a2a"/><path d="M26 3 L32 3 L31 13 L27 13Z" fill="#d8c7a0"/></svg>
<div class="a" style="left:1508px;top:1588px;width:9px;height:4.5px;background:#6f7572;border-radius:3px"></div>
<svg class="a" style="left:1978px;top:1558px;" width="17" height="11" viewBox="0 0 17 11"><path d="M1 10 L8.5 2 L16 10" fill="none" stroke="#222" stroke-width="1.6"/></svg>
<svg class="a" style="left:2024px;top:1551px;" width="24" height="27" viewBox="0 0 24 27"><ellipse cx="10" cy="9" rx="7" ry="8.5" fill="#111"/><ellipse cx="10" cy="18" rx="8" ry="7" fill="#111"/><ellipse cx="10" cy="17" rx="5" ry="5.5" fill="#fff"/><ellipse cx="10" cy="9.5" rx="3.5" ry="1.5" fill="#f5b800"/><path d="M3 12 Q10 15 17 12 V14.5 Q10 17.5 3 14.5Z" fill="#e3262a"/><circle cx="18" cy="21" r="5" fill="#2bc25a"/></svg>
<svg class="a" style="left:2070px;top:1555px;" width="26" height="16" viewBox="0 0 26 16"><path d="M5 15 Q0 15 0.5 10.5 Q1 6.5 5.5 7 Q7 1 13 1 Q19 1 20.5 6.5 Q25.5 6.5 25.5 11 Q25.5 15 21 15Z" fill="#c9cdcc" stroke="#333" stroke-width="1.8"/></svg>
<svg class="a" style="left:2119.7px;top:1552px;" width="24" height="25" viewBox="0 0 24 25"><path d="M11 1 L21 5 V12 Q21 20 11 24 Q1 20 1 12 V5Z" fill="#1e88d8"/><path d="M11 1 L21 5 V12 Q21 20 11 24Z" fill="#53b8f0"/><path d="M16 14 L23 25 H9Z" fill="#f5c400"/><rect x="15.5" y="17" width="1.3" height="4" fill="#222"/></svg>
<svg class="a" style="left:2170px;top:1552px;" width="18.5" height="25" viewBox="0 0 18.5 25"><rect x="0" y="0" width="18.5" height="25" rx="9" fill="#1985e6"/><path d="M5 8 L13.5 16 L9.5 20 V5 L13.5 9 L5 17" fill="none" stroke="#fff" stroke-width="1.5"/></svg>
<svg class="a" style="left:2215px;top:1552px;" width="24" height="25" viewBox="0 0 24 25"><path d="M2 24 L12 2 L22 24 M6.5 15.5 H17.5" fill="none" stroke="#6a6a6a" stroke-width="4"/><path d="M2 24 L12 2 L22 24 M6.5 15.5 H17.5" fill="none" stroke="#eef2f0" stroke-width="1.3"/></svg>
<svg class="a" style="left:2271.8px;top:1552px;" width="26" height="25" viewBox="0 0 26 25"><path d="M3 3 L23 1 L25 22 L4 24Z" fill="#e8632c" transform="rotate(-6 13 12)"/><text x="6.5" y="20" font-family="Liberation Sans" font-weight="bold" font-size="19" fill="#fff">S</text></svg>
<svg class="a" style="left:2328.6px;top:1553px;" width="25" height="21" viewBox="0 0 25 21"><path d="M1.5 8 Q12.5 -2 23.5 8 M5 12 Q12.5 5 20 12 M8.5 15.5 Q12.5 12 16.5 15.5" fill="none" stroke="#1a1a1a" stroke-width="1.8"/><circle cx="12.5" cy="19" r="1.8" fill="#1a1a1a"/></svg>
<svg class="a" style="left:2364px;top:1553px;" width="24" height="22" viewBox="0 0 24 22"><path d="M1.5 7.5 H5.5 L11 2.5 V19.5 L5.5 14.5 H1.5Z" fill="none" stroke="#1a1a1a" stroke-width="1.6"/><path d="M15 7 Q17.5 11 15 15 M18.5 4.5 Q22.5 11 18.5 17.5" fill="none" stroke="#1a1a1a" stroke-width="1.6"/></svg>
<svg class="a" style="left:2400px;top:1551px;" width="25" height="24" viewBox="0 0 25 24"><rect x="1.5" y="8" width="19" height="12" rx="2" fill="none" stroke="#1a1a1a" stroke-width="1.8"/><rect x="21" y="11.5" width="2.5" height="5" fill="#1a1a1a"/><rect x="4" y="10.5" width="12" height="7" fill="#1a1a1a"/><path d="M6 1 L3 7 H7 L5 12" fill="none" stroke="#1a1a1a" stroke-width="1.5"/></svg>
<div class="t" style="left:2487.26px;top:1543.62px;font-size:17.5px;font-family:'Liberation Sans',sans-serif;color:#1a1a1a;transform:scaleX(1.0191);transform-origin:0 0;">17:02</div>
<div class="t" style="left:2448.06px;top:1567.20px;font-size:18px;font-family:'Liberation Sans',sans-serif;color:#1a1a1a;transform:scaleX(1.0467);transform-origin:0 0;">2025/10/9</div>
</body></html>
